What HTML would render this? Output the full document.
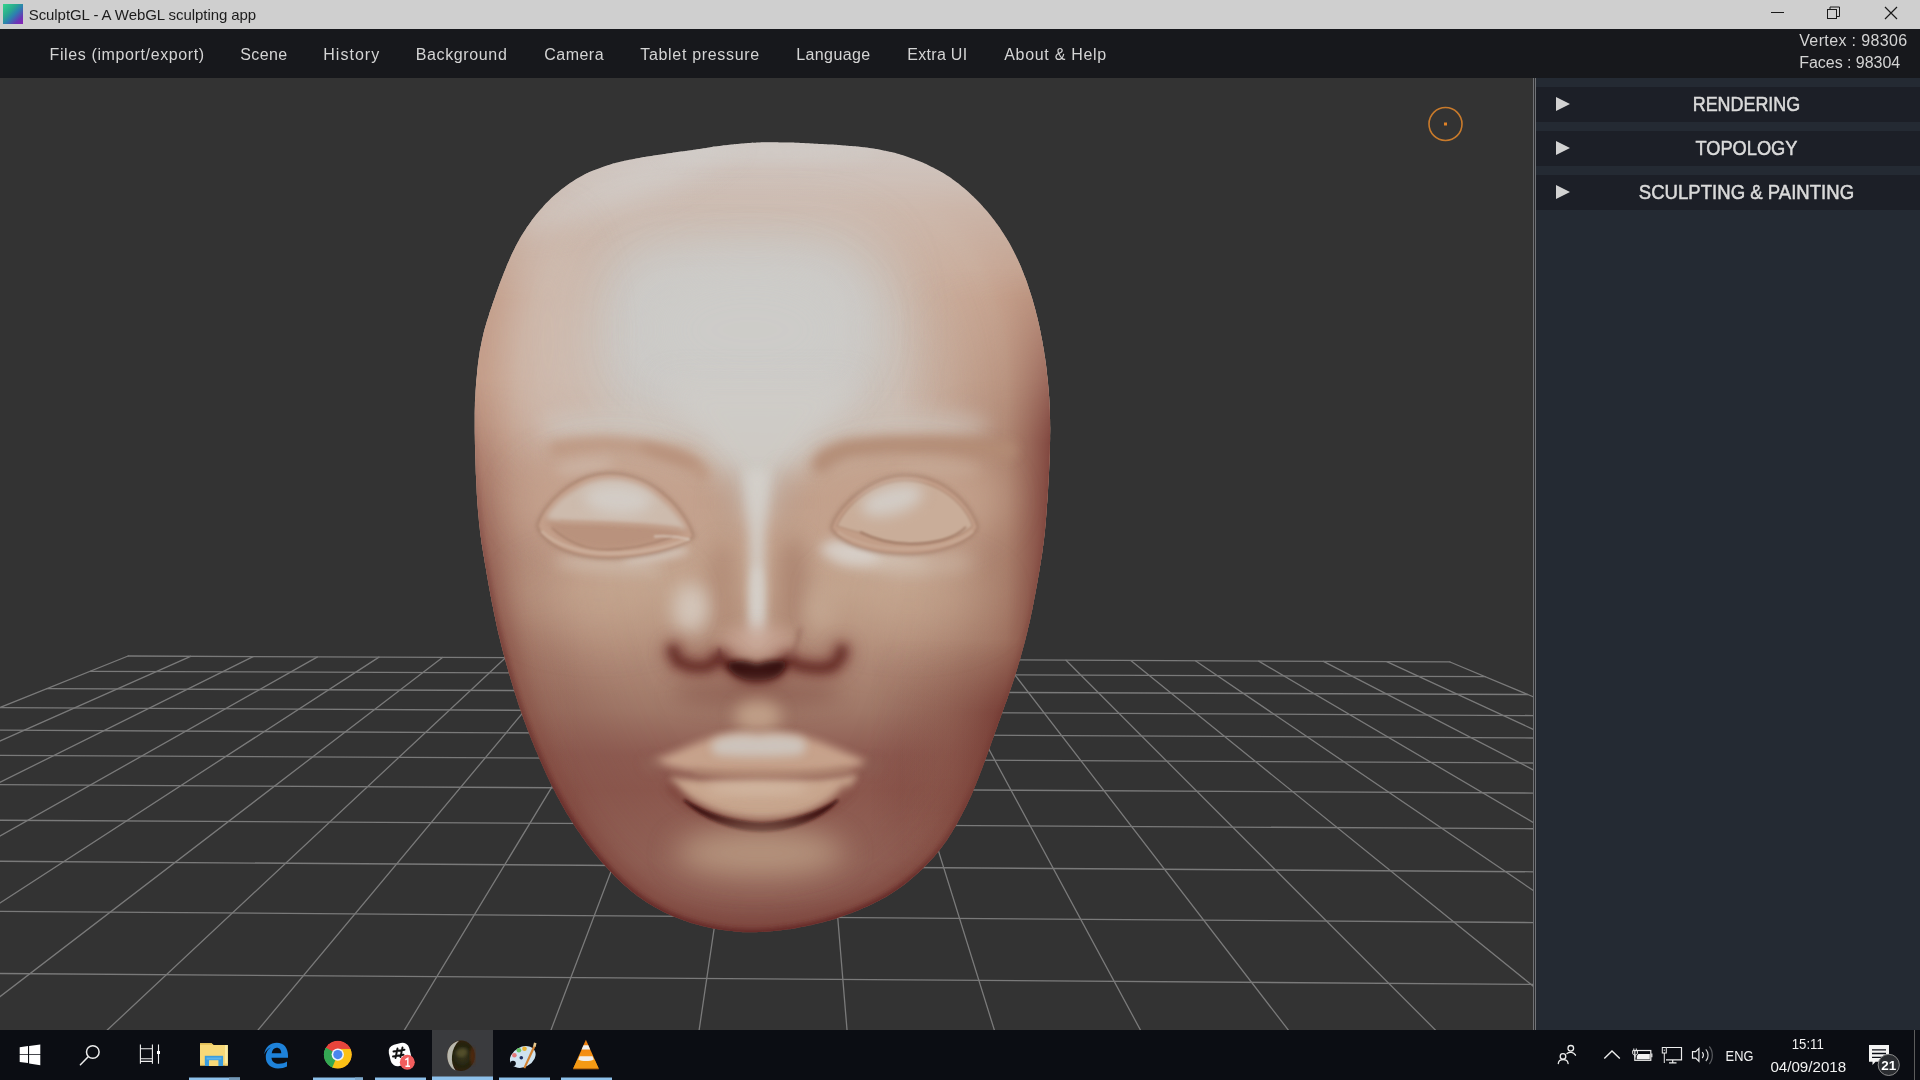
<!DOCTYPE html>
<html><head><meta charset="utf-8"><title>SculptGL - A WebGL sculpting app</title>
<style>
*{margin:0;padding:0;box-sizing:border-box}
html,body{width:1920px;height:1080px;overflow:hidden;background:#333;font-family:"Liberation Sans",sans-serif}
#title{position:absolute;left:0;top:0;width:1920px;height:29px;background:#cfcfcf}
#title .ico{position:absolute;left:3px;top:4px;width:20px;height:20px;background:linear-gradient(135deg,#34d58c 0%,#2aa88f 35%,#2d7fb0 55%,#6a35b5 80%,#8a22b8 100%)}
#title .txt{position:absolute;left:29px;top:5px;font-size:15px;line-height:20px;color:#1a1a1a;white-space:nowrap;width:227px}
#title svg{position:absolute;left:0;top:0}
#title,#menu,#side,#task{will-change:transform;transform:translateZ(0)}
#menu{position:absolute;left:0;top:29px;width:1920px;height:49px;background:#17181c}
.mi{position:absolute;top:13px;height:24px;line-height:24px;font-size:16.5px;color:#d6d6d6;white-space:nowrap;text-align:center}
.stat{position:absolute;left:1800px;font-size:16.5px;color:#d6d6d6;white-space:nowrap;line-height:20px}
#view{position:absolute;left:0;top:78px;width:1534px;height:952px;background:#333;overflow:hidden}
#view svg{position:absolute;left:0;top:0}
#side{position:absolute;left:1533px;top:78px;width:387px;height:952px;background:#242a33;border-left:3px solid #707276;box-shadow:inset 0 0 0 0 #000}
#side:before{content:'';position:absolute;left:-2px;top:0;width:1px;height:952px;background:#2c2d30}
.sec{position:absolute;left:0;width:384px;height:35px;background:#1c1f27}
.sec .tri{position:absolute;left:20px;top:10px;width:0;height:0;border-left:14px solid #d2d2d2;border-top:7px solid transparent;border-bottom:7px solid transparent}
.sec .lab{position:absolute;left:37px;right:0;top:0;height:35px;line-height:35px;text-align:center;font-size:19.5px;color:#dcdcdc;white-space:nowrap;-webkit-text-stroke:0.45px #dcdcdc}
#task{position:absolute;left:0;top:1030px;width:1920px;height:50px;background:#0b0d13;overflow:hidden}
</style></head><body>
<div id="title"><div class="ico"></div>
<svg width="1920" height="29" viewBox="0 0 1920 29" font-family="Liberation Sans, sans-serif"><text x="28.7" y="19.7" font-size="15" fill="#1c1c1c" textLength="227.5" lengthAdjust="spacing" >SculptGL - A WebGL sculpting app</text><g fill="none" stroke="#1a1a1a" stroke-width="1">
<path d="M1771 12.5h13"/><rect x="1827.5" y="9.5" width="9" height="9"/><path d="M1830 9.5v-2.5h9.5v9.500h-3"/><path d="M1885 7l12 12M1897 7l-12 12" stroke-width="1.2"/></g>
</svg></div>
<div id="menu"><svg width="1920" height="49" viewBox="0 29 1920 49" style="position:absolute;left:0;top:0" font-family="Liberation Sans, sans-serif"><text x="49.5" y="59.6" font-size="16" fill="#d4d4d4" textLength="154.7" lengthAdjust="spacing" >Files (import/export)</text><text x="240.2" y="59.6" font-size="16" fill="#d4d4d4" textLength="47.0" lengthAdjust="spacing" >Scene</text><text x="323.2" y="59.6" font-size="16" fill="#d4d4d4" textLength="56.0" lengthAdjust="spacing" >History</text><text x="415.8" y="59.6" font-size="16" fill="#d4d4d4" textLength="91.0" lengthAdjust="spacing" >Background</text><text x="544.2" y="59.6" font-size="16" fill="#d4d4d4" textLength="59.4" lengthAdjust="spacing" >Camera</text><text x="640.2" y="59.6" font-size="16" fill="#d4d4d4" textLength="119.0" lengthAdjust="spacing" >Tablet pressure</text><text x="796.2" y="59.6" font-size="16" fill="#d4d4d4" textLength="74.0" lengthAdjust="spacing" >Language</text><text x="907.2" y="59.6" font-size="16" fill="#d4d4d4" textLength="60.0" lengthAdjust="spacing" >Extra UI</text><text x="1004.2" y="59.6" font-size="16" fill="#d4d4d4" textLength="102.0" lengthAdjust="spacing" >About &amp; Help</text><text x="1799.2" y="45.8" font-size="16" fill="#d4d4d4" textLength="108.0" lengthAdjust="spacing" >Vertex : 98306</text><text x="1799.2" y="67.8" font-size="16" fill="#d4d4d4" textLength="101.0" lengthAdjust="spacing" >Faces : 98304</text></svg></div>
<div id="view"><svg width="1534" height="952" viewBox="0 78 1534 952">
<g stroke="#7a7a7a" stroke-width="1.3" stroke-linecap="round"><line x1="128.2" y1="656.0" x2="1449.9" y2="661.9"/><line x1="90.2" y1="671.3" x2="1485.3" y2="676.7"/><line x1="46.9" y1="688.7" x2="1527.8" y2="694.5"/><line x1="-0.1" y1="707.6" x2="1578.7" y2="715.8"/><line x1="-55.6" y1="729.9" x2="1633.2" y2="738.5"/><line x1="-117.2" y1="754.7" x2="1693.8" y2="763.8"/><line x1="-189.1" y1="783.7" x2="1766.7" y2="794.3"/><line x1="-276.1" y1="818.7" x2="1853.4" y2="830.5"/><line x1="-375.6" y1="858.7" x2="1959.3" y2="874.7"/><line x1="-497.2" y1="907.7" x2="2083.4" y2="926.6"/><line x1="-649.4" y1="968.9" x2="2233.5" y2="989.3"/><line x1="-845.9" y1="1048.0" x2="2435.3" y2="1073.6"/><line x1="-1094.6" y1="1148.1" x2="2698.9" y2="1183.7"/><line x1="-1431.3" y1="1283.6" x2="3064.6" y2="1336.4"/><line x1="128.1" y1="656.0" x2="-975.1" y2="1100.0"/><line x1="190.6" y1="656.3" x2="-807.4" y2="1100.0"/><line x1="253.1" y1="656.6" x2="-640.0" y2="1100.0"/><line x1="317.5" y1="656.9" x2="-467.9" y2="1100.0"/><line x1="379.0" y1="657.1" x2="-303.9" y2="1100.0"/><line x1="442.5" y1="657.4" x2="-134.9" y2="1100.0"/><line x1="505.5" y1="657.7" x2="32.4" y2="1100.0"/><line x1="568.6" y1="658.0" x2="199.6" y2="1100.0"/><line x1="630.0" y1="658.3" x2="362.0" y2="1100.0"/><line x1="691.6" y1="658.6" x2="524.5" y2="1100.0"/><line x1="754.0" y1="658.8" x2="688.8" y2="1100.0"/><line x1="816.4" y1="659.1" x2="852.8" y2="1100.0"/><line x1="878.7" y1="659.4" x2="1016.2" y2="1100.0"/><line x1="940.6" y1="659.7" x2="1178.2" y2="1100.0"/><line x1="1003.4" y1="660.0" x2="1342.2" y2="1100.0"/><line x1="1066.0" y1="660.3" x2="1505.3" y2="1100.0"/><line x1="1130.8" y1="660.6" x2="1673.8" y2="1100.0"/><line x1="1195.4" y1="660.8" x2="1841.5" y2="1100.0"/><line x1="1258.7" y1="661.1" x2="2005.4" y2="1100.0"/><line x1="1323.4" y1="661.4" x2="2172.6" y2="1100.0"/><line x1="1386.7" y1="661.7" x2="2335.8" y2="1100.0"/><line x1="1450.0" y1="662.0" x2="2498.6" y2="1100.0"/></g>
<defs><filter id="b8" filterUnits="userSpaceOnUse" x="380" y="80" width="760" height="900"><feGaussianBlur stdDeviation="0.8"/></filter><filter id="b9" filterUnits="userSpaceOnUse" x="380" y="80" width="760" height="900"><feGaussianBlur stdDeviation="0.9"/></filter><filter id="b10" filterUnits="userSpaceOnUse" x="380" y="80" width="760" height="900"><feGaussianBlur stdDeviation="1"/></filter><filter id="b12" filterUnits="userSpaceOnUse" x="380" y="80" width="760" height="900"><feGaussianBlur stdDeviation="1.2"/></filter><filter id="b15" filterUnits="userSpaceOnUse" x="380" y="80" width="760" height="900"><feGaussianBlur stdDeviation="1.5"/></filter><filter id="b18" filterUnits="userSpaceOnUse" x="380" y="80" width="760" height="900"><feGaussianBlur stdDeviation="1.8"/></filter><filter id="b22" filterUnits="userSpaceOnUse" x="380" y="80" width="760" height="900"><feGaussianBlur stdDeviation="2.2"/></filter><filter id="b24" filterUnits="userSpaceOnUse" x="380" y="80" width="760" height="900"><feGaussianBlur stdDeviation="2.4"/></filter><filter id="b25" filterUnits="userSpaceOnUse" x="380" y="80" width="760" height="900"><feGaussianBlur stdDeviation="2.5"/></filter><filter id="b30" filterUnits="userSpaceOnUse" x="380" y="80" width="760" height="900"><feGaussianBlur stdDeviation="3"/></filter><filter id="b35" filterUnits="userSpaceOnUse" x="380" y="80" width="760" height="900"><feGaussianBlur stdDeviation="3.5"/></filter><filter id="b40" filterUnits="userSpaceOnUse" x="380" y="80" width="760" height="900"><feGaussianBlur stdDeviation="4"/></filter><filter id="b42" filterUnits="userSpaceOnUse" x="380" y="80" width="760" height="900"><feGaussianBlur stdDeviation="4.2"/></filter><filter id="b45" filterUnits="userSpaceOnUse" x="380" y="80" width="760" height="900"><feGaussianBlur stdDeviation="4.5"/></filter><filter id="b50" filterUnits="userSpaceOnUse" x="380" y="80" width="760" height="900"><feGaussianBlur stdDeviation="5"/></filter><filter id="b55" filterUnits="userSpaceOnUse" x="380" y="80" width="760" height="900"><feGaussianBlur stdDeviation="5.5"/></filter><filter id="b60" filterUnits="userSpaceOnUse" x="380" y="80" width="760" height="900"><feGaussianBlur stdDeviation="6"/></filter><filter id="b70" filterUnits="userSpaceOnUse" x="380" y="80" width="760" height="900"><feGaussianBlur stdDeviation="7"/></filter><filter id="b80" filterUnits="userSpaceOnUse" x="380" y="80" width="760" height="900"><feGaussianBlur stdDeviation="8"/></filter><filter id="b90" filterUnits="userSpaceOnUse" x="380" y="80" width="760" height="900"><feGaussianBlur stdDeviation="9"/></filter><filter id="b100" filterUnits="userSpaceOnUse" x="380" y="80" width="760" height="900"><feGaussianBlur stdDeviation="10"/></filter><filter id="b130" filterUnits="userSpaceOnUse" x="380" y="80" width="760" height="900"><feGaussianBlur stdDeviation="13"/></filter><filter id="b140" filterUnits="userSpaceOnUse" x="380" y="80" width="760" height="900"><feGaussianBlur stdDeviation="14"/></filter><filter id="b150" filterUnits="userSpaceOnUse" x="380" y="80" width="760" height="900"><feGaussianBlur stdDeviation="15"/></filter><filter id="b180" filterUnits="userSpaceOnUse" x="380" y="80" width="760" height="900"><feGaussianBlur stdDeviation="18"/></filter><filter id="b220" filterUnits="userSpaceOnUse" x="380" y="80" width="760" height="900"><feGaussianBlur stdDeviation="22"/></filter><filter id="b250" filterUnits="userSpaceOnUse" x="380" y="80" width="760" height="900"><feGaussianBlur stdDeviation="25"/></filter><filter id="b300" filterUnits="userSpaceOnUse" x="380" y="80" width="760" height="900"><feGaussianBlur stdDeviation="30"/></filter><filter id="b320" filterUnits="userSpaceOnUse" x="380" y="80" width="760" height="900"><feGaussianBlur stdDeviation="32"/></filter><filter id="b350" filterUnits="userSpaceOnUse" x="380" y="80" width="760" height="900"><feGaussianBlur stdDeviation="35"/></filter><clipPath id="hc"><path d="M760.0 142.4C766.8 142.2 763.4 142.3 770.2 142.3C776.9 142.2 773.5 142.2 780.3 142.4C787.1 142.5 783.7 142.4 790.5 142.6C797.2 142.8 793.8 142.7 800.6 143.0C807.4 143.2 804.0 143.1 810.7 143.4C817.5 143.7 814.1 143.6 820.9 143.9C827.6 144.3 824.3 144.1 831.0 144.6C837.8 145.0 834.4 144.8 841.2 145.2C847.9 145.7 844.5 145.5 851.3 146.0C858.0 146.6 854.7 146.2 861.4 147.0C868.1 147.7 864.8 147.2 871.4 148.2C878.1 149.2 874.8 148.6 881.4 149.9C888.0 151.2 884.7 150.5 891.3 152.1C897.8 153.7 894.6 152.9 901.0 154.8C907.5 156.8 904.3 155.7 910.6 158.0C917.0 160.2 913.9 159.0 920.1 161.6C926.3 164.2 923.3 162.8 929.4 165.7C935.4 168.6 932.5 167.0 938.3 170.3C944.2 173.6 941.3 171.8 947.0 175.5C952.7 179.1 949.9 177.2 955.3 181.2C960.7 185.2 958.1 183.1 963.2 187.5C968.4 191.8 965.9 189.6 970.8 194.2C975.7 198.8 973.3 196.4 978.0 201.3C982.7 206.2 980.4 203.7 984.8 208.8C989.3 213.8 987.1 211.2 991.3 216.5C995.5 221.8 993.5 219.1 997.4 224.6C1001.3 230.1 999.4 227.3 1003.1 233.0C1006.7 238.6 1005.0 235.8 1008.4 241.6C1011.7 247.5 1010.1 244.5 1013.2 250.5C1016.3 256.5 1014.8 253.5 1017.7 259.6C1020.5 265.7 1019.2 262.6 1021.8 268.9C1024.3 275.1 1023.1 272.0 1025.5 278.3C1027.8 284.6 1026.7 281.5 1028.8 287.9C1031.0 294.3 1029.9 291.1 1031.9 297.5C1033.8 304.0 1032.9 300.8 1034.7 307.3C1036.4 313.8 1035.6 310.5 1037.2 317.1C1038.8 323.7 1038.0 320.4 1039.5 327.0C1040.9 333.6 1040.2 330.3 1041.5 337.0C1042.8 343.6 1042.2 340.3 1043.3 346.9C1044.5 353.6 1043.9 350.3 1044.9 357.0C1045.9 363.6 1045.5 360.3 1046.3 367.0C1047.1 373.7 1046.7 370.4 1047.4 377.1C1048.1 383.8 1047.8 380.5 1048.4 387.2C1049.0 393.9 1048.7 390.6 1049.2 397.3C1049.6 404.1 1049.4 400.7 1049.7 407.5C1050.0 414.2 1049.9 410.8 1050.0 417.6C1050.2 424.4 1050.1 421.0 1050.2 427.7C1050.2 434.5 1050.2 431.1 1050.1 437.9C1050.0 444.7 1050.1 441.3 1049.9 448.0C1049.8 454.8 1049.9 451.4 1049.6 458.2C1049.4 465.0 1049.5 461.6 1049.2 468.3C1048.9 475.1 1049.1 471.7 1048.7 478.5C1048.3 485.2 1048.5 481.9 1048.1 488.6C1047.7 495.4 1047.9 492.0 1047.5 498.8C1047.0 505.5 1047.2 502.1 1046.7 508.9C1046.3 515.6 1046.5 512.3 1046.0 519.0C1045.4 525.8 1045.7 522.4 1045.1 529.1C1044.4 535.9 1044.8 532.5 1044.0 539.2C1043.2 545.9 1043.6 542.6 1042.7 549.3C1041.8 556.0 1042.3 552.6 1041.2 559.3C1040.2 566.0 1040.7 562.7 1039.6 569.3C1038.5 576.0 1039.1 572.7 1037.9 579.3C1036.7 586.0 1037.3 582.7 1036.1 589.3C1034.9 596.0 1035.5 592.7 1034.2 599.3C1033.0 606.0 1033.6 602.7 1032.3 609.3C1030.9 615.9 1031.6 612.6 1030.2 619.2C1028.7 625.8 1029.5 622.5 1027.9 629.1C1026.4 635.7 1027.2 632.4 1025.5 639.0C1023.8 645.5 1024.7 642.3 1022.9 648.8C1021.1 655.3 1022.0 652.1 1020.2 658.6C1018.3 665.1 1019.3 661.8 1017.3 668.3C1015.3 674.8 1016.3 671.6 1014.3 678.0C1012.2 684.4 1013.3 681.2 1011.1 687.6C1008.9 694.0 1010.0 690.8 1007.8 697.2C1005.5 703.6 1006.6 700.4 1004.3 706.8C1002.0 713.2 1003.2 710.0 1000.9 716.3C998.6 722.7 999.7 719.5 997.4 725.9C995.1 732.3 996.3 729.1 994.0 735.5C991.7 741.8 992.9 738.6 990.6 745.0C988.4 751.4 989.5 748.2 987.2 754.6C984.9 761.0 986.1 757.8 983.7 764.1C981.4 770.5 982.6 767.3 980.1 773.6C977.7 779.9 979.0 776.8 976.4 783.1C973.8 789.3 975.2 786.2 972.5 792.4C969.8 798.6 971.2 795.5 968.3 801.7C965.4 807.8 966.9 804.7 963.8 810.8C960.8 816.8 962.4 813.8 959.1 819.7C955.9 825.7 957.6 822.8 954.1 828.6C950.7 834.4 952.5 831.5 948.8 837.2C945.1 842.8 947.0 840.0 943.0 845.4C939.0 850.9 941.1 848.2 936.8 853.4C932.5 858.6 934.7 856.0 930.1 861.0C925.5 865.9 927.9 863.5 923.1 868.2C918.2 872.9 920.7 870.7 915.7 875.1C910.6 879.6 913.2 877.5 908.0 881.7C902.7 885.9 905.4 883.9 899.9 887.8C894.4 891.7 897.2 889.8 891.5 893.4C885.8 897.0 888.7 895.3 882.8 898.6C877.0 901.9 879.9 900.3 873.9 903.3C867.8 906.3 870.9 904.9 864.7 907.6C858.5 910.4 861.6 909.0 855.4 911.6C849.1 914.1 852.2 912.9 845.9 915.1C839.5 917.4 842.7 916.3 836.3 918.4C829.8 920.4 833.1 919.5 826.6 921.3C820.1 923.1 823.3 922.3 816.8 923.8C810.2 925.4 813.5 924.7 806.9 926.1C800.2 927.4 803.6 926.8 796.9 927.9C790.2 929.1 793.6 928.6 786.9 929.5C780.2 930.4 783.5 930.0 776.8 930.8C770.1 931.5 773.5 931.2 766.7 931.7C760.0 932.1 763.3 932.0 756.6 932.2C749.9 932.3 753.2 932.3 746.5 932.2C739.7 932.0 743.1 932.2 736.4 931.7C729.6 931.2 733.0 931.5 726.3 930.6C719.6 929.8 722.9 930.3 716.3 929.1C709.6 927.9 712.9 928.6 706.4 927.1C699.8 925.6 703.1 926.4 696.6 924.6C690.1 922.8 693.3 923.8 686.9 921.6C680.5 919.4 683.7 920.6 677.4 918.1C671.1 915.6 674.2 917.0 668.1 914.1C662.0 911.3 665.0 912.8 659.1 909.6C653.1 906.4 656.0 908.1 650.3 904.6C644.6 901.0 647.4 902.9 641.9 899.0C636.3 895.2 639.0 897.2 633.7 893.0C628.4 888.9 631.0 891.0 625.9 886.6C620.9 882.1 623.4 884.4 618.5 879.7C613.6 875.1 616.0 877.4 611.3 872.6C606.7 867.7 609.0 870.2 604.5 865.1C600.0 860.1 602.2 862.6 597.9 857.4C593.6 852.2 595.7 854.8 591.6 849.5C587.4 844.1 589.4 846.8 585.4 841.4C581.4 835.9 583.4 838.7 579.6 833.1C575.7 827.6 577.6 830.4 573.9 824.7C570.2 819.0 572.0 821.9 568.5 816.1C565.0 810.4 566.7 813.3 563.4 807.4C560.0 801.5 561.7 804.5 558.5 798.5C555.3 792.5 556.9 795.5 553.8 789.5C550.7 783.5 552.2 786.5 549.3 780.4C546.4 774.3 547.8 777.4 545.0 771.2C542.2 765.1 543.6 768.1 540.9 761.9C538.1 755.7 539.5 758.8 536.9 752.6C534.2 746.4 535.5 749.5 533.0 743.2C530.4 737.0 531.6 740.1 529.2 733.8C526.7 727.5 527.9 730.7 525.6 724.3C523.2 718.0 524.3 721.2 522.1 714.8C519.9 708.4 521.0 711.6 518.8 705.2C516.7 698.7 517.8 702.0 515.7 695.5C513.7 689.1 514.7 692.3 512.7 685.8C510.7 679.3 511.7 682.6 509.8 676.1C507.9 669.6 508.8 672.8 507.0 666.3C505.2 659.8 506.1 663.1 504.3 656.5C502.6 650.0 503.4 653.3 501.7 646.7C500.1 640.1 500.9 643.4 499.3 636.8C497.7 630.3 498.5 633.6 497.0 627.0C495.6 620.3 496.3 623.7 494.9 617.0C493.5 610.4 494.2 613.7 492.9 607.1C491.5 600.4 492.2 603.8 490.9 597.1C489.7 590.5 490.3 593.8 489.1 587.1C487.9 580.5 488.5 583.8 487.3 577.1C486.2 570.5 486.7 573.8 485.6 567.1C484.4 560.4 485.0 563.8 483.9 557.1C482.8 550.4 483.3 553.8 482.3 547.1C481.2 540.4 481.7 543.7 480.8 537.0C479.9 530.3 480.3 533.7 479.6 527.0C478.8 520.3 479.2 523.6 478.6 516.9C477.9 510.1 478.2 513.5 477.7 506.8C477.2 500.0 477.5 503.4 477.0 496.6C476.6 489.9 476.8 493.3 476.5 486.5C476.1 479.7 476.3 483.1 476.0 476.3C475.7 469.6 475.8 473.0 475.6 466.2C475.4 459.4 475.5 462.8 475.3 456.0C475.1 449.3 475.2 452.7 475.0 445.9C474.9 439.1 474.9 442.5 474.8 435.7C474.7 429.0 474.7 432.4 474.7 425.6C474.7 418.8 474.7 422.2 474.7 415.4C474.8 408.7 474.7 412.1 474.9 405.3C475.1 398.5 475.0 401.9 475.4 395.2C475.7 388.4 475.5 391.8 476.0 385.0C476.5 378.3 476.2 381.6 476.9 374.9C477.5 368.2 477.1 371.5 477.9 364.8C478.8 358.1 478.3 361.5 479.3 354.8C480.3 348.1 479.7 351.4 481.1 344.8C482.4 338.2 481.6 341.5 483.2 334.9C484.8 328.4 484.0 331.6 485.8 325.1C487.7 318.6 486.7 321.9 488.8 315.4C490.8 309.0 489.8 312.2 492.0 305.8C494.1 299.4 493.0 302.6 495.3 296.2C497.6 289.8 496.4 293.0 498.7 286.6C501.1 280.3 499.9 283.4 502.3 277.1C504.7 270.8 503.4 273.9 506.0 267.7C508.5 261.4 507.2 264.5 509.9 258.4C512.7 252.2 511.2 255.2 514.3 249.2C517.3 243.2 515.7 246.1 519.0 240.3C522.3 234.4 520.6 237.3 524.2 231.6C527.8 225.9 525.9 228.7 529.8 223.2C533.8 217.7 531.7 220.4 535.9 215.1C540.1 209.9 538.0 212.4 542.5 207.4C547.0 202.4 544.7 204.8 549.5 200.1C554.3 195.4 551.8 197.7 556.9 193.3C562.0 188.9 559.4 191.0 564.7 187.0C570.1 182.9 567.4 184.8 573.0 181.2C578.7 177.6 575.8 179.3 581.7 176.1C587.6 172.9 584.6 174.4 590.7 171.6C596.8 168.9 593.7 170.2 600.1 167.9C606.4 165.6 603.2 166.7 609.7 164.7C616.1 162.8 612.9 163.7 619.4 162.1C626.0 160.4 622.7 161.2 629.3 159.8C635.9 158.5 632.6 159.1 639.3 157.9C645.9 156.8 642.6 157.3 649.3 156.3C656.0 155.2 652.6 155.8 659.3 154.8C666.0 153.8 662.7 154.3 669.4 153.3C676.1 152.3 672.7 152.8 679.4 151.8C686.1 150.8 682.8 151.3 689.5 150.4C696.2 149.4 692.8 149.9 699.5 148.9C706.2 147.9 702.9 148.4 709.6 147.4C716.3 146.5 712.9 146.9 719.6 146.1C726.3 145.2 723.0 145.6 729.7 144.8C736.4 144.0 733.0 144.3 739.8 143.7C746.5 143.1 743.1 143.3 749.9 142.9C756.6 142.5 753.3 142.6 760.0 142.4Z"/></clipPath><linearGradient id="skin" gradientUnits="userSpaceOnUse" x1="0" y1="142" x2="0" y2="933">
<stop offset="0" stop-color="#d0c8c3"/><stop offset="0.086" stop-color="#cfc0b7"/><stop offset="0.20" stop-color="#ccc0b7"/>
<stop offset="0.326" stop-color="#cdbdb2"/><stop offset="0.39" stop-color="#c9b09e"/><stop offset="0.45" stop-color="#c3a18d"/>
<stop offset="0.566" stop-color="#c2a38d"/><stop offset="0.636" stop-color="#b38e7a"/><stop offset="0.718" stop-color="#a07868"/>
<stop offset="0.775" stop-color="#8e5c52"/><stop offset="0.82" stop-color="#8c584e"/><stop offset="0.908" stop-color="#96685c"/>
<stop offset="0.955" stop-color="#93655a"/><stop offset="1" stop-color="#80504a"/></linearGradient>
<linearGradient id="upG" gradientUnits="userSpaceOnUse" x1="0" y1="142" x2="0" y2="933">
<stop offset="0" stop-color="#000"/><stop offset="0.05" stop-color="#1a1a1a"/><stop offset="0.2" stop-color="#fff"/><stop offset="0.45" stop-color="#fff"/><stop offset="0.7" stop-color="#000"/><stop offset="1" stop-color="#000"/></linearGradient>
<linearGradient id="loG" gradientUnits="userSpaceOnUse" x1="0" y1="142" x2="0" y2="933">
<stop offset="0" stop-color="#000"/><stop offset="0.3" stop-color="#000"/><stop offset="0.62" stop-color="#fff"/><stop offset="1" stop-color="#fff"/></linearGradient>
<mask id="upM" maskUnits="userSpaceOnUse" x="400" y="100" width="720" height="900"><rect x="400" y="100" width="720" height="900" fill="url(#upG)"/></mask>
<mask id="loM" maskUnits="userSpaceOnUse" x="400" y="100" width="720" height="900"><rect x="400" y="100" width="720" height="900" fill="url(#loG)"/></mask>
<linearGradient id="rsh" gradientUnits="userSpaceOnUse" x1="900" y1="0" x2="1052" y2="0"><stop offset="0" stop-color="#a8806a" stop-opacity="0"/><stop offset="0.35" stop-color="#a8806a" stop-opacity="0.3"/><stop offset="0.7" stop-color="#a07460" stop-opacity="0.6"/><stop offset="1" stop-color="#7a3e38" stop-opacity="0.9"/></linearGradient>
<linearGradient id="lsh" gradientUnits="userSpaceOnUse" x1="580" y1="0" x2="474" y2="0"><stop offset="0" stop-color="#a07460" stop-opacity="0"/><stop offset="0.5" stop-color="#a07460" stop-opacity="0.18"/><stop offset="1" stop-color="#8a5048" stop-opacity="0.6"/></linearGradient>
<linearGradient id="shG" gradientUnits="userSpaceOnUse" x1="0" y1="142" x2="0" y2="933"><stop offset="0" stop-color="#000"/><stop offset="0.16" stop-color="#000"/><stop offset="0.38" stop-color="#fff"/><stop offset="0.8" stop-color="#fff"/><stop offset="1" stop-color="#555"/></linearGradient>
<linearGradient id="shG2" gradientUnits="userSpaceOnUse" x1="0" y1="142" x2="0" y2="933"><stop offset="0" stop-color="#000"/><stop offset="0.36" stop-color="#000"/><stop offset="0.6" stop-color="#fff"/><stop offset="0.8" stop-color="#fff"/><stop offset="1" stop-color="#555"/></linearGradient>
<mask id="shM2" maskUnits="userSpaceOnUse" x="400" y="100" width="720" height="900"><rect x="400" y="100" width="720" height="900" fill="url(#shG2)"/></mask>
<linearGradient id="lrd" gradientUnits="userSpaceOnUse" x1="870" y1="0" x2="1010" y2="0"><stop offset="0" stop-color="#6e2e2a" stop-opacity="0"/><stop offset="0.5" stop-color="#6e2e2a" stop-opacity="0.22"/><stop offset="1" stop-color="#642624" stop-opacity="0.6"/></linearGradient>
<linearGradient id="lrdG" gradientUnits="userSpaceOnUse" x1="0" y1="640" x2="0" y2="880"><stop offset="0" stop-color="#000"/><stop offset="0.3" stop-color="#fff"/><stop offset="0.7" stop-color="#fff"/><stop offset="1" stop-color="#000"/></linearGradient>
<mask id="lrdM" maskUnits="userSpaceOnUse" x="400" y="100" width="720" height="900"><rect x="400" y="100" width="720" height="900" fill="url(#lrdG)"/></mask>
<mask id="shM" maskUnits="userSpaceOnUse" x="400" y="100" width="720" height="900"><rect x="400" y="100" width="720" height="900" fill="url(#shG)"/></mask></defs><g clip-path="url(#hc)"><rect x="440" y="120" width="640" height="830" fill="url(#skin)"/><g mask="url(#upM)"><path d="M760.0 142.4C766.8 142.2 763.4 142.3 770.2 142.3C776.9 142.2 773.5 142.2 780.3 142.4C787.1 142.5 783.7 142.4 790.5 142.6C797.2 142.8 793.8 142.7 800.6 143.0C807.4 143.2 804.0 143.1 810.7 143.4C817.5 143.7 814.1 143.6 820.9 143.9C827.6 144.3 824.3 144.1 831.0 144.6C837.8 145.0 834.4 144.8 841.2 145.2C847.9 145.7 844.5 145.5 851.3 146.0C858.0 146.6 854.7 146.2 861.4 147.0C868.1 147.7 864.8 147.2 871.4 148.2C878.1 149.2 874.8 148.6 881.4 149.9C888.0 151.2 884.7 150.5 891.3 152.1C897.8 153.7 894.6 152.9 901.0 154.8C907.5 156.8 904.3 155.7 910.6 158.0C917.0 160.2 913.9 159.0 920.1 161.6C926.3 164.2 923.3 162.8 929.4 165.7C935.4 168.6 932.5 167.0 938.3 170.3C944.2 173.6 941.3 171.8 947.0 175.5C952.7 179.1 949.9 177.2 955.3 181.2C960.7 185.2 958.1 183.1 963.2 187.5C968.4 191.8 965.9 189.6 970.8 194.2C975.7 198.8 973.3 196.4 978.0 201.3C982.7 206.2 980.4 203.7 984.8 208.8C989.3 213.8 987.1 211.2 991.3 216.5C995.5 221.8 993.5 219.1 997.4 224.6C1001.3 230.1 999.4 227.3 1003.1 233.0C1006.7 238.6 1005.0 235.8 1008.4 241.6C1011.7 247.5 1010.1 244.5 1013.2 250.5C1016.3 256.5 1014.8 253.5 1017.7 259.6C1020.5 265.7 1019.2 262.6 1021.8 268.9C1024.3 275.1 1023.1 272.0 1025.5 278.3C1027.8 284.6 1026.7 281.5 1028.8 287.9C1031.0 294.3 1029.9 291.1 1031.9 297.5C1033.8 304.0 1032.9 300.8 1034.7 307.3C1036.4 313.8 1035.6 310.5 1037.2 317.1C1038.8 323.7 1038.0 320.4 1039.5 327.0C1040.9 333.6 1040.2 330.3 1041.5 337.0C1042.8 343.6 1042.2 340.3 1043.3 346.9C1044.5 353.6 1043.9 350.3 1044.9 357.0C1045.9 363.6 1045.5 360.3 1046.3 367.0C1047.1 373.7 1046.7 370.4 1047.4 377.1C1048.1 383.8 1047.8 380.5 1048.4 387.2C1049.0 393.9 1048.7 390.6 1049.2 397.3C1049.6 404.1 1049.4 400.7 1049.7 407.5C1050.0 414.2 1049.9 410.8 1050.0 417.6C1050.2 424.4 1050.1 421.0 1050.2 427.7C1050.2 434.5 1050.2 431.1 1050.1 437.9C1050.0 444.7 1050.1 441.3 1049.9 448.0C1049.8 454.8 1049.9 451.4 1049.6 458.2C1049.4 465.0 1049.5 461.6 1049.2 468.3C1048.9 475.1 1049.1 471.7 1048.7 478.5C1048.3 485.2 1048.5 481.9 1048.1 488.6C1047.7 495.4 1047.9 492.0 1047.5 498.8C1047.0 505.5 1047.2 502.1 1046.7 508.9C1046.3 515.6 1046.5 512.3 1046.0 519.0C1045.4 525.8 1045.7 522.4 1045.1 529.1C1044.4 535.9 1044.8 532.5 1044.0 539.2C1043.2 545.9 1043.6 542.6 1042.7 549.3C1041.8 556.0 1042.3 552.6 1041.2 559.3C1040.2 566.0 1040.7 562.7 1039.6 569.3C1038.5 576.0 1039.1 572.7 1037.9 579.3C1036.7 586.0 1037.3 582.7 1036.1 589.3C1034.9 596.0 1035.5 592.7 1034.2 599.3C1033.0 606.0 1033.6 602.7 1032.3 609.3C1030.9 615.9 1031.6 612.6 1030.2 619.2C1028.7 625.8 1029.5 622.5 1027.9 629.1C1026.4 635.7 1027.2 632.4 1025.5 639.0C1023.8 645.5 1024.7 642.3 1022.9 648.8C1021.1 655.3 1022.0 652.1 1020.2 658.6C1018.3 665.1 1019.3 661.8 1017.3 668.3C1015.3 674.8 1016.3 671.6 1014.3 678.0C1012.2 684.4 1013.3 681.2 1011.1 687.6C1008.9 694.0 1010.0 690.8 1007.8 697.2C1005.5 703.6 1006.6 700.4 1004.3 706.8C1002.0 713.2 1003.2 710.0 1000.9 716.3C998.6 722.7 999.7 719.5 997.4 725.9C995.1 732.3 996.3 729.1 994.0 735.5C991.7 741.8 992.9 738.6 990.6 745.0C988.4 751.4 989.5 748.2 987.2 754.6C984.9 761.0 986.1 757.8 983.7 764.1C981.4 770.5 982.6 767.3 980.1 773.6C977.7 779.9 979.0 776.8 976.4 783.1C973.8 789.3 975.2 786.2 972.5 792.4C969.8 798.6 971.2 795.5 968.3 801.7C965.4 807.8 966.9 804.7 963.8 810.8C960.8 816.8 962.4 813.8 959.1 819.7C955.9 825.7 957.6 822.8 954.1 828.6C950.7 834.4 952.5 831.5 948.8 837.2C945.1 842.8 947.0 840.0 943.0 845.4C939.0 850.9 941.1 848.2 936.8 853.4C932.5 858.6 934.7 856.0 930.1 861.0C925.5 865.9 927.9 863.5 923.1 868.2C918.2 872.9 920.7 870.7 915.7 875.1C910.6 879.6 913.2 877.5 908.0 881.7C902.7 885.9 905.4 883.9 899.9 887.8C894.4 891.7 897.2 889.8 891.5 893.4C885.8 897.0 888.7 895.3 882.8 898.6C877.0 901.9 879.9 900.3 873.9 903.3C867.8 906.3 870.9 904.9 864.7 907.6C858.5 910.4 861.6 909.0 855.4 911.6C849.1 914.1 852.2 912.9 845.9 915.1C839.5 917.4 842.7 916.3 836.3 918.4C829.8 920.4 833.1 919.5 826.6 921.3C820.1 923.1 823.3 922.3 816.8 923.8C810.2 925.4 813.5 924.7 806.9 926.1C800.2 927.4 803.6 926.8 796.9 927.9C790.2 929.1 793.6 928.6 786.9 929.5C780.2 930.4 783.5 930.0 776.8 930.8C770.1 931.5 773.5 931.2 766.7 931.7C760.0 932.1 763.3 932.0 756.6 932.2C749.9 932.3 753.2 932.3 746.5 932.2C739.7 932.0 743.1 932.2 736.4 931.7C729.6 931.2 733.0 931.5 726.3 930.6C719.6 929.8 722.9 930.3 716.3 929.1C709.6 927.9 712.9 928.6 706.4 927.1C699.8 925.6 703.1 926.4 696.6 924.6C690.1 922.8 693.3 923.8 686.9 921.6C680.5 919.4 683.7 920.6 677.4 918.1C671.1 915.6 674.2 917.0 668.1 914.1C662.0 911.3 665.0 912.8 659.1 909.6C653.1 906.4 656.0 908.1 650.3 904.6C644.6 901.0 647.4 902.9 641.9 899.0C636.3 895.2 639.0 897.2 633.7 893.0C628.4 888.9 631.0 891.0 625.9 886.6C620.9 882.1 623.4 884.4 618.5 879.7C613.6 875.1 616.0 877.4 611.3 872.6C606.7 867.7 609.0 870.2 604.5 865.1C600.0 860.1 602.2 862.6 597.9 857.4C593.6 852.2 595.7 854.8 591.6 849.5C587.4 844.1 589.4 846.8 585.4 841.4C581.4 835.9 583.4 838.7 579.6 833.1C575.7 827.6 577.6 830.4 573.9 824.7C570.2 819.0 572.0 821.9 568.5 816.1C565.0 810.4 566.7 813.3 563.4 807.4C560.0 801.5 561.7 804.5 558.5 798.5C555.3 792.5 556.9 795.5 553.8 789.5C550.7 783.5 552.2 786.5 549.3 780.4C546.4 774.3 547.8 777.4 545.0 771.2C542.2 765.1 543.6 768.1 540.9 761.9C538.1 755.7 539.5 758.8 536.9 752.6C534.2 746.4 535.5 749.5 533.0 743.2C530.4 737.0 531.6 740.1 529.2 733.8C526.7 727.5 527.9 730.7 525.6 724.3C523.2 718.0 524.3 721.2 522.1 714.8C519.9 708.4 521.0 711.6 518.8 705.2C516.7 698.7 517.8 702.0 515.7 695.5C513.7 689.1 514.7 692.3 512.7 685.8C510.7 679.3 511.7 682.6 509.8 676.1C507.9 669.6 508.8 672.8 507.0 666.3C505.2 659.8 506.1 663.1 504.3 656.5C502.6 650.0 503.4 653.3 501.7 646.7C500.1 640.1 500.9 643.4 499.3 636.8C497.7 630.3 498.5 633.6 497.0 627.0C495.6 620.3 496.3 623.7 494.9 617.0C493.5 610.4 494.2 613.7 492.9 607.1C491.5 600.4 492.2 603.8 490.9 597.1C489.7 590.5 490.3 593.8 489.1 587.1C487.9 580.5 488.5 583.8 487.3 577.1C486.2 570.5 486.7 573.8 485.6 567.1C484.4 560.4 485.0 563.8 483.9 557.1C482.8 550.4 483.3 553.8 482.3 547.1C481.2 540.4 481.7 543.7 480.8 537.0C479.9 530.3 480.3 533.7 479.6 527.0C478.8 520.3 479.2 523.6 478.6 516.9C477.9 510.1 478.2 513.5 477.7 506.8C477.2 500.0 477.5 503.4 477.0 496.6C476.6 489.9 476.8 493.3 476.5 486.5C476.1 479.7 476.3 483.1 476.0 476.3C475.7 469.6 475.8 473.0 475.6 466.2C475.4 459.4 475.5 462.8 475.3 456.0C475.1 449.3 475.2 452.7 475.0 445.9C474.9 439.1 474.9 442.5 474.8 435.7C474.7 429.0 474.7 432.4 474.7 425.6C474.7 418.8 474.7 422.2 474.7 415.4C474.8 408.7 474.7 412.1 474.9 405.3C475.1 398.5 475.0 401.9 475.4 395.2C475.7 388.4 475.5 391.8 476.0 385.0C476.5 378.3 476.2 381.6 476.9 374.9C477.5 368.2 477.1 371.5 477.9 364.8C478.8 358.1 478.3 361.5 479.3 354.8C480.3 348.1 479.7 351.4 481.1 344.8C482.4 338.2 481.6 341.5 483.2 334.9C484.8 328.4 484.0 331.6 485.8 325.1C487.7 318.6 486.7 321.9 488.8 315.4C490.8 309.0 489.8 312.2 492.0 305.8C494.1 299.4 493.0 302.6 495.3 296.2C497.6 289.8 496.4 293.0 498.7 286.6C501.1 280.3 499.9 283.4 502.3 277.1C504.7 270.8 503.4 273.9 506.0 267.7C508.5 261.4 507.2 264.5 509.9 258.4C512.7 252.2 511.2 255.2 514.3 249.2C517.3 243.2 515.7 246.1 519.0 240.3C522.3 234.4 520.6 237.3 524.2 231.6C527.8 225.9 525.9 228.7 529.8 223.2C533.8 217.7 531.7 220.4 535.9 215.1C540.1 209.9 538.0 212.4 542.5 207.4C547.0 202.4 544.7 204.8 549.5 200.1C554.3 195.4 551.8 197.7 556.9 193.3C562.0 188.9 559.4 191.0 564.7 187.0C570.1 182.9 567.4 184.8 573.0 181.2C578.7 177.6 575.8 179.3 581.7 176.1C587.6 172.9 584.6 174.4 590.7 171.6C596.8 168.9 593.7 170.2 600.1 167.9C606.4 165.6 603.2 166.7 609.7 164.7C616.1 162.8 612.9 163.7 619.4 162.1C626.0 160.4 622.7 161.2 629.3 159.8C635.9 158.5 632.6 159.1 639.3 157.9C645.9 156.8 642.6 157.3 649.3 156.3C656.0 155.2 652.6 155.8 659.3 154.8C666.0 153.8 662.7 154.3 669.4 153.3C676.1 152.3 672.7 152.8 679.4 151.8C686.1 150.8 682.8 151.3 689.5 150.4C696.2 149.4 692.8 149.9 699.5 148.9C706.2 147.9 702.9 148.4 709.6 147.4C716.3 146.5 712.9 146.9 719.6 146.1C726.3 145.2 723.0 145.6 729.7 144.8C736.4 144.0 733.0 144.3 739.8 143.7C746.5 143.1 743.1 143.3 749.9 142.9C756.6 142.5 753.3 142.6 760.0 142.4Z" fill="none" stroke="#c9a692" stroke-width="210" opacity="0.9" filter="url(#b350)" /><path d="M760.0 142.4C766.8 142.2 763.4 142.3 770.2 142.3C776.9 142.2 773.5 142.2 780.3 142.4C787.1 142.5 783.7 142.4 790.5 142.6C797.2 142.8 793.8 142.7 800.6 143.0C807.4 143.2 804.0 143.1 810.7 143.4C817.5 143.7 814.1 143.6 820.9 143.9C827.6 144.3 824.3 144.1 831.0 144.6C837.8 145.0 834.4 144.8 841.2 145.2C847.9 145.7 844.5 145.5 851.3 146.0C858.0 146.6 854.7 146.2 861.4 147.0C868.1 147.7 864.8 147.2 871.4 148.2C878.1 149.2 874.8 148.6 881.4 149.9C888.0 151.2 884.7 150.5 891.3 152.1C897.8 153.7 894.6 152.9 901.0 154.8C907.5 156.8 904.3 155.7 910.6 158.0C917.0 160.2 913.9 159.0 920.1 161.6C926.3 164.2 923.3 162.8 929.4 165.7C935.4 168.6 932.5 167.0 938.3 170.3C944.2 173.6 941.3 171.8 947.0 175.5C952.7 179.1 949.9 177.2 955.3 181.2C960.7 185.2 958.1 183.1 963.2 187.5C968.4 191.8 965.9 189.6 970.8 194.2C975.7 198.8 973.3 196.4 978.0 201.3C982.7 206.2 980.4 203.7 984.8 208.8C989.3 213.8 987.1 211.2 991.3 216.5C995.5 221.8 993.5 219.1 997.4 224.6C1001.3 230.1 999.4 227.3 1003.1 233.0C1006.7 238.6 1005.0 235.8 1008.4 241.6C1011.7 247.5 1010.1 244.5 1013.2 250.5C1016.3 256.5 1014.8 253.5 1017.7 259.6C1020.5 265.7 1019.2 262.6 1021.8 268.9C1024.3 275.1 1023.1 272.0 1025.5 278.3C1027.8 284.6 1026.7 281.5 1028.8 287.9C1031.0 294.3 1029.9 291.1 1031.9 297.5C1033.8 304.0 1032.9 300.8 1034.7 307.3C1036.4 313.8 1035.6 310.5 1037.2 317.1C1038.8 323.7 1038.0 320.4 1039.5 327.0C1040.9 333.6 1040.2 330.3 1041.5 337.0C1042.8 343.6 1042.2 340.3 1043.3 346.9C1044.5 353.6 1043.9 350.3 1044.9 357.0C1045.9 363.6 1045.5 360.3 1046.3 367.0C1047.1 373.7 1046.7 370.4 1047.4 377.1C1048.1 383.8 1047.8 380.5 1048.4 387.2C1049.0 393.9 1048.7 390.6 1049.2 397.3C1049.6 404.1 1049.4 400.7 1049.7 407.5C1050.0 414.2 1049.9 410.8 1050.0 417.6C1050.2 424.4 1050.1 421.0 1050.2 427.7C1050.2 434.5 1050.2 431.1 1050.1 437.9C1050.0 444.7 1050.1 441.3 1049.9 448.0C1049.8 454.8 1049.9 451.4 1049.6 458.2C1049.4 465.0 1049.5 461.6 1049.2 468.3C1048.9 475.1 1049.1 471.7 1048.7 478.5C1048.3 485.2 1048.5 481.9 1048.1 488.6C1047.7 495.4 1047.9 492.0 1047.5 498.8C1047.0 505.5 1047.2 502.1 1046.7 508.9C1046.3 515.6 1046.5 512.3 1046.0 519.0C1045.4 525.8 1045.7 522.4 1045.1 529.1C1044.4 535.9 1044.8 532.5 1044.0 539.2C1043.2 545.9 1043.6 542.6 1042.7 549.3C1041.8 556.0 1042.3 552.6 1041.2 559.3C1040.2 566.0 1040.7 562.7 1039.6 569.3C1038.5 576.0 1039.1 572.7 1037.9 579.3C1036.7 586.0 1037.3 582.7 1036.1 589.3C1034.9 596.0 1035.5 592.7 1034.2 599.3C1033.0 606.0 1033.6 602.7 1032.3 609.3C1030.9 615.9 1031.6 612.6 1030.2 619.2C1028.7 625.8 1029.5 622.5 1027.9 629.1C1026.4 635.7 1027.2 632.4 1025.5 639.0C1023.8 645.5 1024.7 642.3 1022.9 648.8C1021.1 655.3 1022.0 652.1 1020.2 658.6C1018.3 665.1 1019.3 661.8 1017.3 668.3C1015.3 674.8 1016.3 671.6 1014.3 678.0C1012.2 684.4 1013.3 681.2 1011.1 687.6C1008.9 694.0 1010.0 690.8 1007.8 697.2C1005.5 703.6 1006.6 700.4 1004.3 706.8C1002.0 713.2 1003.2 710.0 1000.9 716.3C998.6 722.7 999.7 719.5 997.4 725.9C995.1 732.3 996.3 729.1 994.0 735.5C991.7 741.8 992.9 738.6 990.6 745.0C988.4 751.4 989.5 748.2 987.2 754.6C984.9 761.0 986.1 757.8 983.7 764.1C981.4 770.5 982.6 767.3 980.1 773.6C977.7 779.9 979.0 776.8 976.4 783.1C973.8 789.3 975.2 786.2 972.5 792.4C969.8 798.6 971.2 795.5 968.3 801.7C965.4 807.8 966.9 804.7 963.8 810.8C960.8 816.8 962.4 813.8 959.1 819.7C955.9 825.7 957.6 822.8 954.1 828.6C950.7 834.4 952.5 831.5 948.8 837.2C945.1 842.8 947.0 840.0 943.0 845.4C939.0 850.9 941.1 848.2 936.8 853.4C932.5 858.6 934.7 856.0 930.1 861.0C925.5 865.9 927.9 863.5 923.1 868.2C918.2 872.9 920.7 870.7 915.7 875.1C910.6 879.6 913.2 877.5 908.0 881.7C902.7 885.9 905.4 883.9 899.9 887.8C894.4 891.7 897.2 889.8 891.5 893.4C885.8 897.0 888.7 895.3 882.8 898.6C877.0 901.9 879.9 900.3 873.9 903.3C867.8 906.3 870.9 904.9 864.7 907.6C858.5 910.4 861.6 909.0 855.4 911.6C849.1 914.1 852.2 912.9 845.9 915.1C839.5 917.4 842.7 916.3 836.3 918.4C829.8 920.4 833.1 919.5 826.6 921.3C820.1 923.1 823.3 922.3 816.8 923.8C810.2 925.4 813.5 924.7 806.9 926.1C800.2 927.4 803.6 926.8 796.9 927.9C790.2 929.1 793.6 928.6 786.9 929.5C780.2 930.4 783.5 930.0 776.8 930.8C770.1 931.5 773.5 931.2 766.7 931.7C760.0 932.1 763.3 932.0 756.6 932.2C749.9 932.3 753.2 932.3 746.5 932.2C739.7 932.0 743.1 932.2 736.4 931.7C729.6 931.2 733.0 931.5 726.3 930.6C719.6 929.8 722.9 930.3 716.3 929.1C709.6 927.9 712.9 928.6 706.4 927.1C699.8 925.6 703.1 926.4 696.6 924.6C690.1 922.8 693.3 923.8 686.9 921.6C680.5 919.4 683.7 920.6 677.4 918.1C671.1 915.6 674.2 917.0 668.1 914.1C662.0 911.3 665.0 912.8 659.1 909.6C653.1 906.4 656.0 908.1 650.3 904.6C644.6 901.0 647.4 902.9 641.9 899.0C636.3 895.2 639.0 897.2 633.7 893.0C628.4 888.9 631.0 891.0 625.9 886.6C620.9 882.1 623.4 884.4 618.5 879.7C613.6 875.1 616.0 877.4 611.3 872.6C606.7 867.7 609.0 870.2 604.5 865.1C600.0 860.1 602.2 862.6 597.9 857.4C593.6 852.2 595.7 854.8 591.6 849.5C587.4 844.1 589.4 846.8 585.4 841.4C581.4 835.9 583.4 838.7 579.6 833.1C575.7 827.6 577.6 830.4 573.9 824.7C570.2 819.0 572.0 821.9 568.5 816.1C565.0 810.4 566.7 813.3 563.4 807.4C560.0 801.5 561.7 804.5 558.5 798.5C555.3 792.5 556.9 795.5 553.8 789.5C550.7 783.5 552.2 786.5 549.3 780.4C546.4 774.3 547.8 777.4 545.0 771.2C542.2 765.1 543.6 768.1 540.9 761.9C538.1 755.7 539.5 758.8 536.9 752.6C534.2 746.4 535.5 749.5 533.0 743.2C530.4 737.0 531.6 740.1 529.2 733.8C526.7 727.5 527.9 730.7 525.6 724.3C523.2 718.0 524.3 721.2 522.1 714.8C519.9 708.4 521.0 711.6 518.8 705.2C516.7 698.7 517.8 702.0 515.7 695.5C513.7 689.1 514.7 692.3 512.7 685.8C510.7 679.3 511.7 682.6 509.8 676.1C507.9 669.6 508.8 672.8 507.0 666.3C505.2 659.8 506.1 663.1 504.3 656.5C502.6 650.0 503.4 653.3 501.7 646.7C500.1 640.1 500.9 643.4 499.3 636.8C497.7 630.3 498.5 633.6 497.0 627.0C495.6 620.3 496.3 623.7 494.9 617.0C493.5 610.4 494.2 613.7 492.9 607.1C491.5 600.4 492.2 603.8 490.9 597.1C489.7 590.5 490.3 593.8 489.1 587.1C487.9 580.5 488.5 583.8 487.3 577.1C486.2 570.5 486.7 573.8 485.6 567.1C484.4 560.4 485.0 563.8 483.9 557.1C482.8 550.4 483.3 553.8 482.3 547.1C481.2 540.4 481.7 543.7 480.8 537.0C479.9 530.3 480.3 533.7 479.6 527.0C478.8 520.3 479.2 523.6 478.6 516.9C477.9 510.1 478.2 513.5 477.7 506.8C477.2 500.0 477.5 503.4 477.0 496.6C476.6 489.9 476.8 493.3 476.5 486.5C476.1 479.7 476.3 483.1 476.0 476.3C475.7 469.6 475.8 473.0 475.6 466.2C475.4 459.4 475.5 462.8 475.3 456.0C475.1 449.3 475.2 452.7 475.0 445.9C474.9 439.1 474.9 442.5 474.8 435.7C474.7 429.0 474.7 432.4 474.7 425.6C474.7 418.8 474.7 422.2 474.7 415.4C474.8 408.7 474.7 412.1 474.9 405.3C475.1 398.5 475.0 401.9 475.4 395.2C475.7 388.4 475.5 391.8 476.0 385.0C476.5 378.3 476.2 381.6 476.9 374.9C477.5 368.2 477.1 371.5 477.9 364.8C478.8 358.1 478.3 361.5 479.3 354.8C480.3 348.1 479.7 351.4 481.1 344.8C482.4 338.2 481.6 341.5 483.2 334.9C484.8 328.4 484.0 331.6 485.8 325.1C487.7 318.6 486.7 321.9 488.8 315.4C490.8 309.0 489.8 312.2 492.0 305.8C494.1 299.4 493.0 302.6 495.3 296.2C497.6 289.8 496.4 293.0 498.7 286.6C501.1 280.3 499.9 283.4 502.3 277.1C504.7 270.8 503.4 273.9 506.0 267.7C508.5 261.4 507.2 264.5 509.9 258.4C512.7 252.2 511.2 255.2 514.3 249.2C517.3 243.2 515.7 246.1 519.0 240.3C522.3 234.4 520.6 237.3 524.2 231.6C527.8 225.9 525.9 228.7 529.8 223.2C533.8 217.7 531.7 220.4 535.9 215.1C540.1 209.9 538.0 212.4 542.5 207.4C547.0 202.4 544.7 204.8 549.5 200.1C554.3 195.4 551.8 197.7 556.9 193.3C562.0 188.9 559.4 191.0 564.7 187.0C570.1 182.9 567.4 184.8 573.0 181.2C578.7 177.6 575.8 179.3 581.7 176.1C587.6 172.9 584.6 174.4 590.7 171.6C596.8 168.9 593.7 170.2 600.1 167.9C606.4 165.6 603.2 166.7 609.7 164.7C616.1 162.8 612.9 163.7 619.4 162.1C626.0 160.4 622.7 161.2 629.3 159.8C635.9 158.5 632.6 159.1 639.3 157.9C645.9 156.8 642.6 157.3 649.3 156.3C656.0 155.2 652.6 155.8 659.3 154.8C666.0 153.8 662.7 154.3 669.4 153.3C676.1 152.3 672.7 152.8 679.4 151.8C686.1 150.8 682.8 151.3 689.5 150.4C696.2 149.4 692.8 149.9 699.5 148.9C706.2 147.9 702.9 148.4 709.6 147.4C716.3 146.5 712.9 146.9 719.6 146.1C726.3 145.2 723.0 145.6 729.7 144.8C736.4 144.0 733.0 144.3 739.8 143.7C746.5 143.1 743.1 143.3 749.9 142.9C756.6 142.5 753.3 142.6 760.0 142.4Z" fill="none" stroke="#bf947f" stroke-width="50" opacity="0.6" filter="url(#b140)" /></g><g mask="url(#loM)"><path d="M760.0 142.4C766.8 142.2 763.4 142.3 770.2 142.3C776.9 142.2 773.5 142.2 780.3 142.4C787.1 142.5 783.7 142.4 790.5 142.6C797.2 142.8 793.8 142.7 800.6 143.0C807.4 143.2 804.0 143.1 810.7 143.4C817.5 143.7 814.1 143.6 820.9 143.9C827.6 144.3 824.3 144.1 831.0 144.6C837.8 145.0 834.4 144.8 841.2 145.2C847.9 145.7 844.5 145.5 851.3 146.0C858.0 146.6 854.7 146.2 861.4 147.0C868.1 147.7 864.8 147.2 871.4 148.2C878.1 149.2 874.8 148.6 881.4 149.9C888.0 151.2 884.7 150.5 891.3 152.1C897.8 153.7 894.6 152.9 901.0 154.8C907.5 156.8 904.3 155.7 910.6 158.0C917.0 160.2 913.9 159.0 920.1 161.6C926.3 164.2 923.3 162.8 929.4 165.7C935.4 168.6 932.5 167.0 938.3 170.3C944.2 173.6 941.3 171.8 947.0 175.5C952.7 179.1 949.9 177.2 955.3 181.2C960.7 185.2 958.1 183.1 963.2 187.5C968.4 191.8 965.9 189.6 970.8 194.2C975.7 198.8 973.3 196.4 978.0 201.3C982.7 206.2 980.4 203.7 984.8 208.8C989.3 213.8 987.1 211.2 991.3 216.5C995.5 221.8 993.5 219.1 997.4 224.6C1001.3 230.1 999.4 227.3 1003.1 233.0C1006.7 238.6 1005.0 235.8 1008.4 241.6C1011.7 247.5 1010.1 244.5 1013.2 250.5C1016.3 256.5 1014.8 253.5 1017.7 259.6C1020.5 265.7 1019.2 262.6 1021.8 268.9C1024.3 275.1 1023.1 272.0 1025.5 278.3C1027.8 284.6 1026.7 281.5 1028.8 287.9C1031.0 294.3 1029.9 291.1 1031.9 297.5C1033.8 304.0 1032.9 300.8 1034.7 307.3C1036.4 313.8 1035.6 310.5 1037.2 317.1C1038.8 323.7 1038.0 320.4 1039.5 327.0C1040.9 333.6 1040.2 330.3 1041.5 337.0C1042.8 343.6 1042.2 340.3 1043.3 346.9C1044.5 353.6 1043.9 350.3 1044.9 357.0C1045.9 363.6 1045.5 360.3 1046.3 367.0C1047.1 373.7 1046.7 370.4 1047.4 377.1C1048.1 383.8 1047.8 380.5 1048.4 387.2C1049.0 393.9 1048.7 390.6 1049.2 397.3C1049.6 404.1 1049.4 400.7 1049.7 407.5C1050.0 414.2 1049.9 410.8 1050.0 417.6C1050.2 424.4 1050.1 421.0 1050.2 427.7C1050.2 434.5 1050.2 431.1 1050.1 437.9C1050.0 444.7 1050.1 441.3 1049.9 448.0C1049.8 454.8 1049.9 451.4 1049.6 458.2C1049.4 465.0 1049.5 461.6 1049.2 468.3C1048.9 475.1 1049.1 471.7 1048.7 478.5C1048.3 485.2 1048.5 481.9 1048.1 488.6C1047.7 495.4 1047.9 492.0 1047.5 498.8C1047.0 505.5 1047.2 502.1 1046.7 508.9C1046.3 515.6 1046.5 512.3 1046.0 519.0C1045.4 525.8 1045.7 522.4 1045.1 529.1C1044.4 535.9 1044.8 532.5 1044.0 539.2C1043.2 545.9 1043.6 542.6 1042.7 549.3C1041.8 556.0 1042.3 552.6 1041.2 559.3C1040.2 566.0 1040.7 562.7 1039.6 569.3C1038.5 576.0 1039.1 572.7 1037.9 579.3C1036.7 586.0 1037.3 582.7 1036.1 589.3C1034.9 596.0 1035.5 592.7 1034.2 599.3C1033.0 606.0 1033.6 602.7 1032.3 609.3C1030.9 615.9 1031.6 612.6 1030.2 619.2C1028.7 625.8 1029.5 622.5 1027.9 629.1C1026.4 635.7 1027.2 632.4 1025.5 639.0C1023.8 645.5 1024.7 642.3 1022.9 648.8C1021.1 655.3 1022.0 652.1 1020.2 658.6C1018.3 665.1 1019.3 661.8 1017.3 668.3C1015.3 674.8 1016.3 671.6 1014.3 678.0C1012.2 684.4 1013.3 681.2 1011.1 687.6C1008.9 694.0 1010.0 690.8 1007.8 697.2C1005.5 703.6 1006.6 700.4 1004.3 706.8C1002.0 713.2 1003.2 710.0 1000.9 716.3C998.6 722.7 999.7 719.5 997.4 725.9C995.1 732.3 996.3 729.1 994.0 735.5C991.7 741.8 992.9 738.6 990.6 745.0C988.4 751.4 989.5 748.2 987.2 754.6C984.9 761.0 986.1 757.8 983.7 764.1C981.4 770.5 982.6 767.3 980.1 773.6C977.7 779.9 979.0 776.8 976.4 783.1C973.8 789.3 975.2 786.2 972.5 792.4C969.8 798.6 971.2 795.5 968.3 801.7C965.4 807.8 966.9 804.7 963.8 810.8C960.8 816.8 962.4 813.8 959.1 819.7C955.9 825.7 957.6 822.8 954.1 828.6C950.7 834.4 952.5 831.5 948.8 837.2C945.1 842.8 947.0 840.0 943.0 845.4C939.0 850.9 941.1 848.2 936.8 853.4C932.5 858.6 934.7 856.0 930.1 861.0C925.5 865.9 927.9 863.5 923.1 868.2C918.2 872.9 920.7 870.7 915.7 875.1C910.6 879.6 913.2 877.5 908.0 881.7C902.7 885.9 905.4 883.9 899.9 887.8C894.4 891.7 897.2 889.8 891.5 893.4C885.8 897.0 888.7 895.3 882.8 898.6C877.0 901.9 879.9 900.3 873.9 903.3C867.8 906.3 870.9 904.9 864.7 907.6C858.5 910.4 861.6 909.0 855.4 911.6C849.1 914.1 852.2 912.9 845.9 915.1C839.5 917.4 842.7 916.3 836.3 918.4C829.8 920.4 833.1 919.5 826.6 921.3C820.1 923.1 823.3 922.3 816.8 923.8C810.2 925.4 813.5 924.7 806.9 926.1C800.2 927.4 803.6 926.8 796.9 927.9C790.2 929.1 793.6 928.6 786.9 929.5C780.2 930.4 783.5 930.0 776.8 930.8C770.1 931.5 773.5 931.2 766.7 931.7C760.0 932.1 763.3 932.0 756.6 932.2C749.9 932.3 753.2 932.3 746.5 932.2C739.7 932.0 743.1 932.2 736.4 931.7C729.6 931.2 733.0 931.5 726.3 930.6C719.6 929.8 722.9 930.3 716.3 929.1C709.6 927.9 712.9 928.6 706.4 927.1C699.8 925.6 703.1 926.4 696.6 924.6C690.1 922.8 693.3 923.8 686.9 921.6C680.5 919.4 683.7 920.6 677.4 918.1C671.1 915.6 674.2 917.0 668.1 914.1C662.0 911.3 665.0 912.8 659.1 909.6C653.1 906.4 656.0 908.1 650.3 904.6C644.6 901.0 647.4 902.9 641.9 899.0C636.3 895.2 639.0 897.2 633.7 893.0C628.4 888.9 631.0 891.0 625.9 886.6C620.9 882.1 623.4 884.4 618.5 879.7C613.6 875.1 616.0 877.4 611.3 872.6C606.7 867.7 609.0 870.2 604.5 865.1C600.0 860.1 602.2 862.6 597.9 857.4C593.6 852.2 595.7 854.8 591.6 849.5C587.4 844.1 589.4 846.8 585.4 841.4C581.4 835.9 583.4 838.7 579.6 833.1C575.7 827.6 577.6 830.4 573.9 824.7C570.2 819.0 572.0 821.9 568.5 816.1C565.0 810.4 566.7 813.3 563.4 807.4C560.0 801.5 561.7 804.5 558.5 798.5C555.3 792.5 556.9 795.5 553.8 789.5C550.7 783.5 552.2 786.5 549.3 780.4C546.4 774.3 547.8 777.4 545.0 771.2C542.2 765.1 543.6 768.1 540.9 761.9C538.1 755.7 539.5 758.8 536.9 752.6C534.2 746.4 535.5 749.5 533.0 743.2C530.4 737.0 531.6 740.1 529.2 733.8C526.7 727.5 527.9 730.7 525.6 724.3C523.2 718.0 524.3 721.2 522.1 714.8C519.9 708.4 521.0 711.6 518.8 705.2C516.7 698.7 517.8 702.0 515.7 695.5C513.7 689.1 514.7 692.3 512.7 685.8C510.7 679.3 511.7 682.6 509.8 676.1C507.9 669.6 508.8 672.8 507.0 666.3C505.2 659.8 506.1 663.1 504.3 656.5C502.6 650.0 503.4 653.3 501.7 646.7C500.1 640.1 500.9 643.4 499.3 636.8C497.7 630.3 498.5 633.6 497.0 627.0C495.6 620.3 496.3 623.7 494.9 617.0C493.5 610.4 494.2 613.7 492.9 607.1C491.5 600.4 492.2 603.8 490.9 597.1C489.7 590.5 490.3 593.8 489.1 587.1C487.9 580.5 488.5 583.8 487.3 577.1C486.2 570.5 486.7 573.8 485.6 567.1C484.4 560.4 485.0 563.8 483.9 557.1C482.8 550.4 483.3 553.8 482.3 547.1C481.2 540.4 481.7 543.7 480.8 537.0C479.9 530.3 480.3 533.7 479.6 527.0C478.8 520.3 479.2 523.6 478.6 516.9C477.9 510.1 478.2 513.5 477.7 506.8C477.2 500.0 477.5 503.4 477.0 496.6C476.6 489.9 476.8 493.3 476.5 486.5C476.1 479.7 476.3 483.1 476.0 476.3C475.7 469.6 475.8 473.0 475.6 466.2C475.4 459.4 475.5 462.8 475.3 456.0C475.1 449.3 475.2 452.7 475.0 445.9C474.9 439.1 474.9 442.5 474.8 435.7C474.7 429.0 474.7 432.4 474.7 425.6C474.7 418.8 474.7 422.2 474.7 415.4C474.8 408.7 474.7 412.1 474.9 405.3C475.1 398.5 475.0 401.9 475.4 395.2C475.7 388.4 475.5 391.8 476.0 385.0C476.5 378.3 476.2 381.6 476.9 374.9C477.5 368.2 477.1 371.5 477.9 364.8C478.8 358.1 478.3 361.5 479.3 354.8C480.3 348.1 479.7 351.4 481.1 344.8C482.4 338.2 481.6 341.5 483.2 334.9C484.8 328.4 484.0 331.6 485.8 325.1C487.7 318.6 486.7 321.9 488.8 315.4C490.8 309.0 489.8 312.2 492.0 305.8C494.1 299.4 493.0 302.6 495.3 296.2C497.6 289.8 496.4 293.0 498.7 286.6C501.1 280.3 499.9 283.4 502.3 277.1C504.7 270.8 503.4 273.9 506.0 267.7C508.5 261.4 507.2 264.5 509.9 258.4C512.7 252.2 511.2 255.2 514.3 249.2C517.3 243.2 515.7 246.1 519.0 240.3C522.3 234.4 520.6 237.3 524.2 231.6C527.8 225.9 525.9 228.7 529.8 223.2C533.8 217.7 531.7 220.4 535.9 215.1C540.1 209.9 538.0 212.4 542.5 207.4C547.0 202.4 544.7 204.8 549.5 200.1C554.3 195.4 551.8 197.7 556.9 193.3C562.0 188.9 559.4 191.0 564.7 187.0C570.1 182.9 567.4 184.8 573.0 181.2C578.7 177.6 575.8 179.3 581.7 176.1C587.6 172.9 584.6 174.4 590.7 171.6C596.8 168.9 593.7 170.2 600.1 167.9C606.4 165.6 603.2 166.7 609.7 164.7C616.1 162.8 612.9 163.7 619.4 162.1C626.0 160.4 622.7 161.2 629.3 159.8C635.9 158.5 632.6 159.1 639.3 157.9C645.9 156.8 642.6 157.3 649.3 156.3C656.0 155.2 652.6 155.8 659.3 154.8C666.0 153.8 662.7 154.3 669.4 153.3C676.1 152.3 672.7 152.8 679.4 151.8C686.1 150.8 682.8 151.3 689.5 150.4C696.2 149.4 692.8 149.9 699.5 148.9C706.2 147.9 702.9 148.4 709.6 147.4C716.3 146.5 712.9 146.9 719.6 146.1C726.3 145.2 723.0 145.6 729.7 144.8C736.4 144.0 733.0 144.3 739.8 143.7C746.5 143.1 743.1 143.3 749.9 142.9C756.6 142.5 753.3 142.6 760.0 142.4Z" fill="none" stroke="#86524a" stroke-width="130" opacity="0.45" filter="url(#b320)" /><path d="M760.0 142.4C766.8 142.2 763.4 142.3 770.2 142.3C776.9 142.2 773.5 142.2 780.3 142.4C787.1 142.5 783.7 142.4 790.5 142.6C797.2 142.8 793.8 142.7 800.6 143.0C807.4 143.2 804.0 143.1 810.7 143.4C817.5 143.7 814.1 143.6 820.9 143.9C827.6 144.3 824.3 144.1 831.0 144.6C837.8 145.0 834.4 144.8 841.2 145.2C847.9 145.7 844.5 145.5 851.3 146.0C858.0 146.6 854.7 146.2 861.4 147.0C868.1 147.7 864.8 147.2 871.4 148.2C878.1 149.2 874.8 148.6 881.4 149.9C888.0 151.2 884.7 150.5 891.3 152.1C897.8 153.7 894.6 152.9 901.0 154.8C907.5 156.8 904.3 155.7 910.6 158.0C917.0 160.2 913.9 159.0 920.1 161.6C926.3 164.2 923.3 162.8 929.4 165.7C935.4 168.6 932.5 167.0 938.3 170.3C944.2 173.6 941.3 171.8 947.0 175.5C952.7 179.1 949.9 177.2 955.3 181.2C960.7 185.2 958.1 183.1 963.2 187.5C968.4 191.8 965.9 189.6 970.8 194.2C975.7 198.8 973.3 196.4 978.0 201.3C982.7 206.2 980.4 203.7 984.8 208.8C989.3 213.8 987.1 211.2 991.3 216.5C995.5 221.8 993.5 219.1 997.4 224.6C1001.3 230.1 999.4 227.3 1003.1 233.0C1006.7 238.6 1005.0 235.8 1008.4 241.6C1011.7 247.5 1010.1 244.5 1013.2 250.5C1016.3 256.5 1014.8 253.5 1017.7 259.6C1020.5 265.7 1019.2 262.6 1021.8 268.9C1024.3 275.1 1023.1 272.0 1025.5 278.3C1027.8 284.6 1026.7 281.5 1028.8 287.9C1031.0 294.3 1029.9 291.1 1031.9 297.5C1033.8 304.0 1032.9 300.8 1034.7 307.3C1036.4 313.8 1035.6 310.5 1037.2 317.1C1038.8 323.7 1038.0 320.4 1039.5 327.0C1040.9 333.6 1040.2 330.3 1041.5 337.0C1042.8 343.6 1042.2 340.3 1043.3 346.9C1044.5 353.6 1043.9 350.3 1044.9 357.0C1045.9 363.6 1045.5 360.3 1046.3 367.0C1047.1 373.7 1046.7 370.4 1047.4 377.1C1048.1 383.8 1047.8 380.5 1048.4 387.2C1049.0 393.9 1048.7 390.6 1049.2 397.3C1049.6 404.1 1049.4 400.7 1049.7 407.5C1050.0 414.2 1049.9 410.8 1050.0 417.6C1050.2 424.4 1050.1 421.0 1050.2 427.7C1050.2 434.5 1050.2 431.1 1050.1 437.9C1050.0 444.7 1050.1 441.3 1049.9 448.0C1049.8 454.8 1049.9 451.4 1049.6 458.2C1049.4 465.0 1049.5 461.6 1049.2 468.3C1048.9 475.1 1049.1 471.7 1048.7 478.5C1048.3 485.2 1048.5 481.9 1048.1 488.6C1047.7 495.4 1047.9 492.0 1047.5 498.8C1047.0 505.5 1047.2 502.1 1046.7 508.9C1046.3 515.6 1046.5 512.3 1046.0 519.0C1045.4 525.8 1045.7 522.4 1045.1 529.1C1044.4 535.9 1044.8 532.5 1044.0 539.2C1043.2 545.9 1043.6 542.6 1042.7 549.3C1041.8 556.0 1042.3 552.6 1041.2 559.3C1040.2 566.0 1040.7 562.7 1039.6 569.3C1038.5 576.0 1039.1 572.7 1037.9 579.3C1036.7 586.0 1037.3 582.7 1036.1 589.3C1034.9 596.0 1035.5 592.7 1034.2 599.3C1033.0 606.0 1033.6 602.7 1032.3 609.3C1030.9 615.9 1031.6 612.6 1030.2 619.2C1028.7 625.8 1029.5 622.5 1027.9 629.1C1026.4 635.7 1027.2 632.4 1025.5 639.0C1023.8 645.5 1024.7 642.3 1022.9 648.8C1021.1 655.3 1022.0 652.1 1020.2 658.6C1018.3 665.1 1019.3 661.8 1017.3 668.3C1015.3 674.8 1016.3 671.6 1014.3 678.0C1012.2 684.4 1013.3 681.2 1011.1 687.6C1008.9 694.0 1010.0 690.8 1007.8 697.2C1005.5 703.6 1006.6 700.4 1004.3 706.8C1002.0 713.2 1003.2 710.0 1000.9 716.3C998.6 722.7 999.7 719.5 997.4 725.9C995.1 732.3 996.3 729.1 994.0 735.5C991.7 741.8 992.9 738.6 990.6 745.0C988.4 751.4 989.5 748.2 987.2 754.6C984.9 761.0 986.1 757.8 983.7 764.1C981.4 770.5 982.6 767.3 980.1 773.6C977.7 779.9 979.0 776.8 976.4 783.1C973.8 789.3 975.2 786.2 972.5 792.4C969.8 798.6 971.2 795.5 968.3 801.7C965.4 807.8 966.9 804.7 963.8 810.8C960.8 816.8 962.4 813.8 959.1 819.7C955.9 825.7 957.6 822.8 954.1 828.6C950.7 834.4 952.5 831.5 948.8 837.2C945.1 842.8 947.0 840.0 943.0 845.4C939.0 850.9 941.1 848.2 936.8 853.4C932.5 858.6 934.7 856.0 930.1 861.0C925.5 865.9 927.9 863.5 923.1 868.2C918.2 872.9 920.7 870.7 915.7 875.1C910.6 879.6 913.2 877.5 908.0 881.7C902.7 885.9 905.4 883.9 899.9 887.8C894.4 891.7 897.2 889.8 891.5 893.4C885.8 897.0 888.7 895.3 882.8 898.6C877.0 901.9 879.9 900.3 873.9 903.3C867.8 906.3 870.9 904.9 864.7 907.6C858.5 910.4 861.6 909.0 855.4 911.6C849.1 914.1 852.2 912.9 845.9 915.1C839.5 917.4 842.7 916.3 836.3 918.4C829.8 920.4 833.1 919.5 826.6 921.3C820.1 923.1 823.3 922.3 816.8 923.8C810.2 925.4 813.5 924.7 806.9 926.1C800.2 927.4 803.6 926.8 796.9 927.9C790.2 929.1 793.6 928.6 786.9 929.5C780.2 930.4 783.5 930.0 776.8 930.8C770.1 931.5 773.5 931.2 766.7 931.7C760.0 932.1 763.3 932.0 756.6 932.2C749.9 932.3 753.2 932.3 746.5 932.2C739.7 932.0 743.1 932.2 736.4 931.7C729.6 931.2 733.0 931.5 726.3 930.6C719.6 929.8 722.9 930.3 716.3 929.1C709.6 927.9 712.9 928.6 706.4 927.1C699.8 925.6 703.1 926.4 696.6 924.6C690.1 922.8 693.3 923.8 686.9 921.6C680.5 919.4 683.7 920.6 677.4 918.1C671.1 915.6 674.2 917.0 668.1 914.1C662.0 911.3 665.0 912.8 659.1 909.6C653.1 906.4 656.0 908.1 650.3 904.6C644.6 901.0 647.4 902.9 641.9 899.0C636.3 895.2 639.0 897.2 633.7 893.0C628.4 888.9 631.0 891.0 625.9 886.6C620.9 882.1 623.4 884.4 618.5 879.7C613.6 875.1 616.0 877.4 611.3 872.6C606.7 867.7 609.0 870.2 604.5 865.1C600.0 860.1 602.2 862.6 597.9 857.4C593.6 852.2 595.7 854.8 591.6 849.5C587.4 844.1 589.4 846.8 585.4 841.4C581.4 835.9 583.4 838.7 579.6 833.1C575.7 827.6 577.6 830.4 573.9 824.7C570.2 819.0 572.0 821.9 568.5 816.1C565.0 810.4 566.7 813.3 563.4 807.4C560.0 801.5 561.7 804.5 558.5 798.5C555.3 792.5 556.9 795.5 553.8 789.5C550.7 783.5 552.2 786.5 549.3 780.4C546.4 774.3 547.8 777.4 545.0 771.2C542.2 765.1 543.6 768.1 540.9 761.9C538.1 755.7 539.5 758.8 536.9 752.6C534.2 746.4 535.5 749.5 533.0 743.2C530.4 737.0 531.6 740.1 529.2 733.8C526.7 727.5 527.9 730.7 525.6 724.3C523.2 718.0 524.3 721.2 522.1 714.8C519.9 708.4 521.0 711.6 518.8 705.2C516.7 698.7 517.8 702.0 515.7 695.5C513.7 689.1 514.7 692.3 512.7 685.8C510.7 679.3 511.7 682.6 509.8 676.1C507.9 669.6 508.8 672.8 507.0 666.3C505.2 659.8 506.1 663.1 504.3 656.5C502.6 650.0 503.4 653.3 501.7 646.7C500.1 640.1 500.9 643.4 499.3 636.8C497.7 630.3 498.5 633.6 497.0 627.0C495.6 620.3 496.3 623.7 494.9 617.0C493.5 610.4 494.2 613.7 492.9 607.1C491.5 600.4 492.2 603.8 490.9 597.1C489.7 590.5 490.3 593.8 489.1 587.1C487.9 580.5 488.5 583.8 487.3 577.1C486.2 570.5 486.7 573.8 485.6 567.1C484.4 560.4 485.0 563.8 483.9 557.1C482.8 550.4 483.3 553.8 482.3 547.1C481.2 540.4 481.7 543.7 480.8 537.0C479.9 530.3 480.3 533.7 479.6 527.0C478.8 520.3 479.2 523.6 478.6 516.9C477.9 510.1 478.2 513.5 477.7 506.8C477.2 500.0 477.5 503.4 477.0 496.6C476.6 489.9 476.8 493.3 476.5 486.5C476.1 479.7 476.3 483.1 476.0 476.3C475.7 469.6 475.8 473.0 475.6 466.2C475.4 459.4 475.5 462.8 475.3 456.0C475.1 449.3 475.2 452.7 475.0 445.9C474.9 439.1 474.9 442.5 474.8 435.7C474.7 429.0 474.7 432.4 474.7 425.6C474.7 418.8 474.7 422.2 474.7 415.4C474.8 408.7 474.7 412.1 474.9 405.3C475.1 398.5 475.0 401.9 475.4 395.2C475.7 388.4 475.5 391.8 476.0 385.0C476.5 378.3 476.2 381.6 476.9 374.9C477.5 368.2 477.1 371.5 477.9 364.8C478.8 358.1 478.3 361.5 479.3 354.8C480.3 348.1 479.7 351.4 481.1 344.8C482.4 338.2 481.6 341.5 483.2 334.9C484.8 328.4 484.0 331.6 485.8 325.1C487.7 318.6 486.7 321.9 488.8 315.4C490.8 309.0 489.8 312.2 492.0 305.8C494.1 299.4 493.0 302.6 495.3 296.2C497.6 289.8 496.4 293.0 498.7 286.6C501.1 280.3 499.9 283.4 502.3 277.1C504.7 270.8 503.4 273.9 506.0 267.7C508.5 261.4 507.2 264.5 509.9 258.4C512.7 252.2 511.2 255.2 514.3 249.2C517.3 243.2 515.7 246.1 519.0 240.3C522.3 234.4 520.6 237.3 524.2 231.6C527.8 225.9 525.9 228.7 529.8 223.2C533.8 217.7 531.7 220.4 535.9 215.1C540.1 209.9 538.0 212.4 542.5 207.4C547.0 202.4 544.7 204.8 549.5 200.1C554.3 195.4 551.8 197.7 556.9 193.3C562.0 188.9 559.4 191.0 564.7 187.0C570.1 182.9 567.4 184.8 573.0 181.2C578.7 177.6 575.8 179.3 581.7 176.1C587.6 172.9 584.6 174.4 590.7 171.6C596.8 168.9 593.7 170.2 600.1 167.9C606.4 165.6 603.2 166.7 609.7 164.7C616.1 162.8 612.9 163.7 619.4 162.1C626.0 160.4 622.7 161.2 629.3 159.8C635.9 158.5 632.6 159.1 639.3 157.9C645.9 156.8 642.6 157.3 649.3 156.3C656.0 155.2 652.6 155.8 659.3 154.8C666.0 153.8 662.7 154.3 669.4 153.3C676.1 152.3 672.7 152.8 679.4 151.8C686.1 150.8 682.8 151.3 689.5 150.4C696.2 149.4 692.8 149.9 699.5 148.9C706.2 147.9 702.9 148.4 709.6 147.4C716.3 146.5 712.9 146.9 719.6 146.1C726.3 145.2 723.0 145.6 729.7 144.8C736.4 144.0 733.0 144.3 739.8 143.7C746.5 143.1 743.1 143.3 749.9 142.9C756.6 142.5 753.3 142.6 760.0 142.4Z" fill="none" stroke="#7a4038" stroke-width="30" opacity="0.6" filter="url(#b90)" /><path d="M760.0 142.4C766.8 142.2 763.4 142.3 770.2 142.3C776.9 142.2 773.5 142.2 780.3 142.4C787.1 142.5 783.7 142.4 790.5 142.6C797.2 142.8 793.8 142.7 800.6 143.0C807.4 143.2 804.0 143.1 810.7 143.4C817.5 143.7 814.1 143.6 820.9 143.9C827.6 144.3 824.3 144.1 831.0 144.6C837.8 145.0 834.4 144.8 841.2 145.2C847.9 145.7 844.5 145.5 851.3 146.0C858.0 146.6 854.7 146.2 861.4 147.0C868.1 147.7 864.8 147.2 871.4 148.2C878.1 149.2 874.8 148.6 881.4 149.9C888.0 151.2 884.7 150.5 891.3 152.1C897.8 153.7 894.6 152.9 901.0 154.8C907.5 156.8 904.3 155.7 910.6 158.0C917.0 160.2 913.9 159.0 920.1 161.6C926.3 164.2 923.3 162.8 929.4 165.7C935.4 168.6 932.5 167.0 938.3 170.3C944.2 173.6 941.3 171.8 947.0 175.5C952.7 179.1 949.9 177.2 955.3 181.2C960.7 185.2 958.1 183.1 963.2 187.5C968.4 191.8 965.9 189.6 970.8 194.2C975.7 198.8 973.3 196.4 978.0 201.3C982.7 206.2 980.4 203.7 984.8 208.8C989.3 213.8 987.1 211.2 991.3 216.5C995.5 221.8 993.5 219.1 997.4 224.6C1001.3 230.1 999.4 227.3 1003.1 233.0C1006.7 238.6 1005.0 235.8 1008.4 241.6C1011.7 247.5 1010.1 244.5 1013.2 250.5C1016.3 256.5 1014.8 253.5 1017.7 259.6C1020.5 265.7 1019.2 262.6 1021.8 268.9C1024.3 275.1 1023.1 272.0 1025.5 278.3C1027.8 284.6 1026.7 281.5 1028.8 287.9C1031.0 294.3 1029.9 291.1 1031.9 297.5C1033.8 304.0 1032.9 300.8 1034.7 307.3C1036.4 313.8 1035.6 310.5 1037.2 317.1C1038.8 323.7 1038.0 320.4 1039.5 327.0C1040.9 333.6 1040.2 330.3 1041.5 337.0C1042.8 343.6 1042.2 340.3 1043.3 346.9C1044.5 353.6 1043.9 350.3 1044.9 357.0C1045.9 363.6 1045.5 360.3 1046.3 367.0C1047.1 373.7 1046.7 370.4 1047.4 377.1C1048.1 383.8 1047.8 380.5 1048.4 387.2C1049.0 393.9 1048.7 390.6 1049.2 397.3C1049.6 404.1 1049.4 400.7 1049.7 407.5C1050.0 414.2 1049.9 410.8 1050.0 417.6C1050.2 424.4 1050.1 421.0 1050.2 427.7C1050.2 434.5 1050.2 431.1 1050.1 437.9C1050.0 444.7 1050.1 441.3 1049.9 448.0C1049.8 454.8 1049.9 451.4 1049.6 458.2C1049.4 465.0 1049.5 461.6 1049.2 468.3C1048.9 475.1 1049.1 471.7 1048.7 478.5C1048.3 485.2 1048.5 481.9 1048.1 488.6C1047.7 495.4 1047.9 492.0 1047.5 498.8C1047.0 505.5 1047.2 502.1 1046.7 508.9C1046.3 515.6 1046.5 512.3 1046.0 519.0C1045.4 525.8 1045.7 522.4 1045.1 529.1C1044.4 535.9 1044.8 532.5 1044.0 539.2C1043.2 545.9 1043.6 542.6 1042.7 549.3C1041.8 556.0 1042.3 552.6 1041.2 559.3C1040.2 566.0 1040.7 562.7 1039.6 569.3C1038.5 576.0 1039.1 572.7 1037.9 579.3C1036.7 586.0 1037.3 582.7 1036.1 589.3C1034.9 596.0 1035.5 592.7 1034.2 599.3C1033.0 606.0 1033.6 602.7 1032.3 609.3C1030.9 615.9 1031.6 612.6 1030.2 619.2C1028.7 625.8 1029.5 622.5 1027.9 629.1C1026.4 635.7 1027.2 632.4 1025.5 639.0C1023.8 645.5 1024.7 642.3 1022.9 648.8C1021.1 655.3 1022.0 652.1 1020.2 658.6C1018.3 665.1 1019.3 661.8 1017.3 668.3C1015.3 674.8 1016.3 671.6 1014.3 678.0C1012.2 684.4 1013.3 681.2 1011.1 687.6C1008.9 694.0 1010.0 690.8 1007.8 697.2C1005.5 703.6 1006.6 700.4 1004.3 706.8C1002.0 713.2 1003.2 710.0 1000.9 716.3C998.6 722.7 999.7 719.5 997.4 725.9C995.1 732.3 996.3 729.1 994.0 735.5C991.7 741.8 992.9 738.6 990.6 745.0C988.4 751.4 989.5 748.2 987.2 754.6C984.9 761.0 986.1 757.8 983.7 764.1C981.4 770.5 982.6 767.3 980.1 773.6C977.7 779.9 979.0 776.8 976.4 783.1C973.8 789.3 975.2 786.2 972.5 792.4C969.8 798.6 971.2 795.5 968.3 801.7C965.4 807.8 966.9 804.7 963.8 810.8C960.8 816.8 962.4 813.8 959.1 819.7C955.9 825.7 957.6 822.8 954.1 828.6C950.7 834.4 952.5 831.5 948.8 837.2C945.1 842.8 947.0 840.0 943.0 845.4C939.0 850.9 941.1 848.2 936.8 853.4C932.5 858.6 934.7 856.0 930.1 861.0C925.5 865.9 927.9 863.5 923.1 868.2C918.2 872.9 920.7 870.7 915.7 875.1C910.6 879.6 913.2 877.5 908.0 881.7C902.7 885.9 905.4 883.9 899.9 887.8C894.4 891.7 897.2 889.8 891.5 893.4C885.8 897.0 888.7 895.3 882.8 898.6C877.0 901.9 879.9 900.3 873.9 903.3C867.8 906.3 870.9 904.9 864.7 907.6C858.5 910.4 861.6 909.0 855.4 911.6C849.1 914.1 852.2 912.9 845.9 915.1C839.5 917.4 842.7 916.3 836.3 918.4C829.8 920.4 833.1 919.5 826.6 921.3C820.1 923.1 823.3 922.3 816.8 923.8C810.2 925.4 813.5 924.7 806.9 926.1C800.2 927.4 803.6 926.8 796.9 927.9C790.2 929.1 793.6 928.6 786.9 929.5C780.2 930.4 783.5 930.0 776.8 930.8C770.1 931.5 773.5 931.2 766.7 931.7C760.0 932.1 763.3 932.0 756.6 932.2C749.9 932.3 753.2 932.3 746.5 932.2C739.7 932.0 743.1 932.2 736.4 931.7C729.6 931.2 733.0 931.5 726.3 930.6C719.6 929.8 722.9 930.3 716.3 929.1C709.6 927.9 712.9 928.6 706.4 927.1C699.8 925.6 703.1 926.4 696.6 924.6C690.1 922.8 693.3 923.8 686.9 921.6C680.5 919.4 683.7 920.6 677.4 918.1C671.1 915.6 674.2 917.0 668.1 914.1C662.0 911.3 665.0 912.8 659.1 909.6C653.1 906.4 656.0 908.1 650.3 904.6C644.6 901.0 647.4 902.9 641.9 899.0C636.3 895.2 639.0 897.2 633.7 893.0C628.4 888.9 631.0 891.0 625.9 886.6C620.9 882.1 623.4 884.4 618.5 879.7C613.6 875.1 616.0 877.4 611.3 872.6C606.7 867.7 609.0 870.2 604.5 865.1C600.0 860.1 602.2 862.6 597.9 857.4C593.6 852.2 595.7 854.8 591.6 849.5C587.4 844.1 589.4 846.8 585.4 841.4C581.4 835.9 583.4 838.7 579.6 833.1C575.7 827.6 577.6 830.4 573.9 824.7C570.2 819.0 572.0 821.9 568.5 816.1C565.0 810.4 566.7 813.3 563.4 807.4C560.0 801.5 561.7 804.5 558.5 798.5C555.3 792.5 556.9 795.5 553.8 789.5C550.7 783.5 552.2 786.5 549.3 780.4C546.4 774.3 547.8 777.4 545.0 771.2C542.2 765.1 543.6 768.1 540.9 761.9C538.1 755.7 539.5 758.8 536.9 752.6C534.2 746.4 535.5 749.5 533.0 743.2C530.4 737.0 531.6 740.1 529.2 733.8C526.7 727.5 527.9 730.7 525.6 724.3C523.2 718.0 524.3 721.2 522.1 714.8C519.9 708.4 521.0 711.6 518.8 705.2C516.7 698.7 517.8 702.0 515.7 695.5C513.7 689.1 514.7 692.3 512.7 685.8C510.7 679.3 511.7 682.6 509.8 676.1C507.9 669.6 508.8 672.8 507.0 666.3C505.2 659.8 506.1 663.1 504.3 656.5C502.6 650.0 503.4 653.3 501.7 646.7C500.1 640.1 500.9 643.4 499.3 636.8C497.7 630.3 498.5 633.6 497.0 627.0C495.6 620.3 496.3 623.7 494.9 617.0C493.5 610.4 494.2 613.7 492.9 607.1C491.5 600.4 492.2 603.8 490.9 597.1C489.7 590.5 490.3 593.8 489.1 587.1C487.9 580.5 488.5 583.8 487.3 577.1C486.2 570.5 486.7 573.8 485.6 567.1C484.4 560.4 485.0 563.8 483.9 557.1C482.8 550.4 483.3 553.8 482.3 547.1C481.2 540.4 481.7 543.7 480.8 537.0C479.9 530.3 480.3 533.7 479.6 527.0C478.8 520.3 479.2 523.6 478.6 516.9C477.9 510.1 478.2 513.5 477.7 506.8C477.2 500.0 477.5 503.4 477.0 496.6C476.6 489.9 476.8 493.3 476.5 486.5C476.1 479.7 476.3 483.1 476.0 476.3C475.7 469.6 475.8 473.0 475.6 466.2C475.4 459.4 475.5 462.8 475.3 456.0C475.1 449.3 475.2 452.7 475.0 445.9C474.9 439.1 474.9 442.5 474.8 435.7C474.7 429.0 474.7 432.4 474.7 425.6C474.7 418.8 474.7 422.2 474.7 415.4C474.8 408.7 474.7 412.1 474.9 405.3C475.1 398.5 475.0 401.9 475.4 395.2C475.7 388.4 475.5 391.8 476.0 385.0C476.5 378.3 476.2 381.6 476.9 374.9C477.5 368.2 477.1 371.5 477.9 364.8C478.8 358.1 478.3 361.5 479.3 354.8C480.3 348.1 479.7 351.4 481.1 344.8C482.4 338.2 481.6 341.5 483.2 334.9C484.8 328.4 484.0 331.6 485.8 325.1C487.7 318.6 486.7 321.9 488.8 315.4C490.8 309.0 489.8 312.2 492.0 305.8C494.1 299.4 493.0 302.6 495.3 296.2C497.6 289.8 496.4 293.0 498.7 286.6C501.1 280.3 499.9 283.4 502.3 277.1C504.7 270.8 503.4 273.9 506.0 267.7C508.5 261.4 507.2 264.5 509.9 258.4C512.7 252.2 511.2 255.2 514.3 249.2C517.3 243.2 515.7 246.1 519.0 240.3C522.3 234.4 520.6 237.3 524.2 231.6C527.8 225.9 525.9 228.7 529.8 223.2C533.8 217.7 531.7 220.4 535.9 215.1C540.1 209.9 538.0 212.4 542.5 207.4C547.0 202.4 544.7 204.8 549.5 200.1C554.3 195.4 551.8 197.7 556.9 193.3C562.0 188.9 559.4 191.0 564.7 187.0C570.1 182.9 567.4 184.8 573.0 181.2C578.7 177.6 575.8 179.3 581.7 176.1C587.6 172.9 584.6 174.4 590.7 171.6C596.8 168.9 593.7 170.2 600.1 167.9C606.4 165.6 603.2 166.7 609.7 164.7C616.1 162.8 612.9 163.7 619.4 162.1C626.0 160.4 622.7 161.2 629.3 159.8C635.9 158.5 632.6 159.1 639.3 157.9C645.9 156.8 642.6 157.3 649.3 156.3C656.0 155.2 652.6 155.8 659.3 154.8C666.0 153.8 662.7 154.3 669.4 153.3C676.1 152.3 672.7 152.8 679.4 151.8C686.1 150.8 682.8 151.3 689.5 150.4C696.2 149.4 692.8 149.9 699.5 148.9C706.2 147.9 702.9 148.4 709.6 147.4C716.3 146.5 712.9 146.9 719.6 146.1C726.3 145.2 723.0 145.6 729.7 144.8C736.4 144.0 733.0 144.3 739.8 143.7C746.5 143.1 743.1 143.3 749.9 142.9C756.6 142.5 753.3 142.6 760.0 142.4Z" fill="none" stroke="#5e2220" stroke-width="7" opacity="0.75" filter="url(#b22)" /></g><rect x="592" y="233" width="290" height="190" rx="60" fill="#cccbc8" filter="url(#b300)" opacity="0.97"/><ellipse cx="750" cy="330" rx="110" ry="70" fill="#cdccc9" opacity="0.8" filter="url(#b250)"/><g mask="url(#shM)"><rect x="890" y="120" width="180" height="830" fill="url(#rsh)"/></g><g mask="url(#shM2)"><rect x="460" y="120" width="130" height="830" fill="url(#lsh)"/></g><g mask="url(#lrdM)"><rect x="860" y="600" width="200" height="300" fill="url(#lrd)"/></g><ellipse cx="625" cy="186" rx="115" ry="20" fill="#d3d0cd" opacity="0.6" filter="url(#b130)" transform="rotate(-22 625 186)"/><ellipse cx="770" cy="152" rx="110" ry="9" fill="#d3d0cd" opacity="0.5" filter="url(#b80)"/><ellipse cx="548" cy="340" rx="42" ry="120" fill="#d2c6be" opacity="0.55" filter="url(#b220)"/><ellipse cx="620" cy="426" rx="80" ry="14" fill="#cfc9c3" opacity="0.8" filter="url(#b100)"/><ellipse cx="905" cy="426" rx="85" ry="14" fill="#cec6bf" opacity="0.7" filter="url(#b100)"/><path d="M660 380 L860 380 C830 430 790 470 772 520 L742 520 C724 470 690 430 660 380Z" fill="#cfccc8" stroke="none" stroke-width="0" opacity="0.9" filter="url(#b140)" /><ellipse cx="612" cy="500" rx="95" ry="50" fill="#c4a28e" opacity="0.85" filter="url(#b180)"/><ellipse cx="905" cy="500" rx="100" ry="50" fill="#c3a18c" opacity="0.85" filter="url(#b180)"/><path d="M556.0 449.0C565.7 447.7 563.7 446.3 585.0 445.0C606.3 443.7 594.3 442.3 620.0 445.0C645.7 447.7 638.7 446.7 662.0 453.0C685.3 459.3 676.3 457.0 690.0 464.0C703.7 471.0 698.7 470.7 703.0 474.0" fill="none" stroke="#bc957f" stroke-width="14" opacity="0.8" filter="url(#b55)" stroke-linecap="round"/><ellipse cx="670" cy="455" rx="32" ry="7" fill="#b58d77" opacity="0.6" filter="url(#b50)" transform="rotate(18 670 455)"/><path d="M821.0 464.0C825.7 460.7 820.3 459.7 835.0 454.0C849.7 448.3 838.3 450.0 865.0 447.0C891.7 444.0 883.3 445.3 915.0 445.0C946.7 444.7 929.0 444.3 960.0 446.0C991.0 447.7 992.0 448.7 1008.0 450.0" fill="none" stroke="#b28b75" stroke-width="18" opacity="0.92" filter="url(#b55)" stroke-linecap="round"/><ellipse cx="585" cy="466" rx="30" ry="7" fill="#ceb9ab" opacity="0.7" filter="url(#b60)" transform="rotate(-8 585 466)"/><ellipse cx="940" cy="468" rx="40" ry="7" fill="#c8ae9c" opacity="0.5" filter="url(#b60)" transform="rotate(3 940 468)"/><ellipse cx="722" cy="590" rx="16" ry="50" fill="#b08974" opacity="0.8" filter="url(#b100)"/><ellipse cx="793" cy="585" rx="16" ry="50" fill="#aa826e" opacity="0.85" filter="url(#b100)"/><ellipse cx="728" cy="505" rx="13" ry="38" fill="#ba9a85" opacity="0.55" filter="url(#b100)"/><ellipse cx="786" cy="505" rx="13" ry="38" fill="#ba9a85" opacity="0.55" filter="url(#b100)"/><path d="M746 470 C749 520 750 560 750 600 C750 620 748 635 748 645 L766 645 C766 635 764 620 764 600 C764 560 765 520 768 470Z" fill="#d4d0cb" stroke="none" stroke-width="0" opacity="0.9" filter="url(#b60)" /><ellipse cx="757" cy="600" rx="7" ry="35" fill="#d8d4cf" opacity="0.7" filter="url(#b40)"/><ellipse cx="757" cy="642" rx="36" ry="16" fill="#c8a594" opacity="0.85" filter="url(#b80)"/><ellipse cx="690" cy="608" rx="19" ry="24" fill="#d6cabf" opacity="0.95" filter="url(#b90)"/><ellipse cx="820" cy="610" rx="15" ry="20" fill="#c4a792" opacity="0.85" filter="url(#b90)"/><path d="M673.0 650.0C674.0 652.3 673.0 652.7 676.0 657.0C679.0 661.3 674.3 659.7 682.0 663.0C689.7 666.3 689.0 666.7 699.0 667.0C709.0 667.3 705.3 667.3 712.0 664.0C718.7 660.7 714.3 657.3 719.0 657.0C723.7 656.7 721.0 659.0 726.0 663.0C731.0 667.0 727.7 664.7 734.0 669.0C740.3 673.3 737.0 672.8 745.0 676.0C753.0 679.2 749.0 678.8 758.0 678.5C767.0 678.2 764.3 678.5 772.0 675.0C779.7 671.5 775.7 673.0 781.0 668.0C786.3 663.0 783.3 661.3 788.0 660.0C792.7 658.7 789.3 661.7 795.0 664.0C800.7 666.3 795.0 665.7 805.0 667.0C815.0 668.3 815.0 669.3 825.0 668.0C835.0 666.7 830.0 666.7 835.0 663.0C840.0 659.3 837.7 661.3 840.0 657.0C842.3 652.7 841.3 652.3 842.0 650.0" fill="none" stroke="#8a5248" stroke-width="22" opacity="0.8" filter="url(#b80)" stroke-linecap="round"/><path d="M673.0 650.0C674.0 652.3 673.0 652.7 676.0 657.0C679.0 661.3 674.3 659.7 682.0 663.0C689.7 666.3 689.0 666.7 699.0 667.0C709.0 667.3 705.3 667.3 712.0 664.0C718.7 660.7 714.3 657.3 719.0 657.0C723.7 656.7 721.0 659.0 726.0 663.0C731.0 667.0 727.7 664.7 734.0 669.0C740.3 673.3 737.0 672.8 745.0 676.0C753.0 679.2 749.0 678.8 758.0 678.5C767.0 678.2 764.3 678.5 772.0 675.0C779.7 671.5 775.7 673.0 781.0 668.0C786.3 663.0 783.3 661.3 788.0 660.0C792.7 658.7 789.3 661.7 795.0 664.0C800.7 666.3 795.0 665.7 805.0 667.0C815.0 668.3 815.0 669.3 825.0 668.0C835.0 666.7 830.0 666.7 835.0 663.0C840.0 659.3 837.7 661.3 840.0 657.0C842.3 652.7 841.3 652.3 842.0 650.0" fill="none" stroke="#5e2824" stroke-width="11" opacity="0.8" filter="url(#b42)" stroke-linecap="round"/><path d="M726 663 C738 659 748 661 757 664 C766 661 776 659 787 662 C785 675 772 681 757 681 C742 681 730 675 726 663Z" fill="#330707" stroke="none" stroke-width="0" opacity="0.97" filter="url(#b30)" /><path d="M719.0 648.0C719.3 650.7 719.0 651.0 720.0 656.0C721.0 661.0 721.3 660.7 722.0 663.0" fill="none" stroke="#6a3430" stroke-width="2.5" opacity="0.6" filter="url(#b15)" /><path d="M800.0 628.0C798.7 634.0 799.7 635.7 796.0 646.0C792.3 656.3 791.3 654.7 789.0 659.0" fill="none" stroke="#8a5a50" stroke-width="3.5" opacity="0.6" filter="url(#b25)" /><ellipse cx="757" cy="694" rx="85" ry="14" fill="#87564c" opacity="0.6" filter="url(#b100)"/><ellipse cx="758" cy="716" rx="24" ry="16" fill="#c4a48c" opacity="0.9" filter="url(#b80)"/><ellipse cx="610" cy="566" rx="55" ry="9" fill="#d0c0b2" opacity="0.75" filter="url(#b70)" transform="rotate(5 610 566)"/><ellipse cx="880" cy="560" rx="50" ry="11" fill="#d6cabf" opacity="0.9" filter="url(#b80)" transform="rotate(6 880 560)"/><ellipse cx="930" cy="566" rx="45" ry="10" fill="#cebbac" opacity="0.7" filter="url(#b90)" transform="rotate(-6 930 566)"/><ellipse cx="600" cy="600" rx="80" ry="32" fill="#c4a690" opacity="0.5" filter="url(#b220)"/><ellipse cx="910" cy="600" rx="80" ry="32" fill="#c4a690" opacity="0.5" filter="url(#b220)"/><ellipse cx="656" cy="555" rx="34" ry="6" fill="#d8d0c8" opacity="0.75" filter="url(#b40)" transform="rotate(-9 656 555)"/><ellipse cx="850" cy="552" rx="30" ry="11" fill="#d8d2cc" opacity="0.85" filter="url(#b60)" transform="rotate(8 850 552)"/><path d="M539 526C543 508 572 476 608 475C648 474 680 505 692 536C675 548 645 556 608 556.5C575 556.500 547 545 539 526Z" fill="#c4a08b" stroke="#a07a66" stroke-width="5" opacity="0.9" filter="url(#b25)" /><path d="M539 526C543 508 572 476 608 475C648 474 680 505 692 536C675 548 645 556 608 556.5C575 556.500 547 545 539 526Z" fill="#c4a08b" stroke="#bf9a85" stroke-width="1.5" opacity="1" filter="url(#b8)" /><path d="M545 519C556 521 570 522 585 522C620 522 660 525 687 530C680 536 665 541 647 544C630 548 615 549.500 605 549.500C583 549.500 556 541 545 519Z" fill="#b8917c" stroke="none" stroke-width="0" opacity="0.9" filter="url(#b30)" /><path d="M552 528C570 544 590 549.500 606 549.500C625 549.500 650 545 672 537" fill="none" stroke="#a07a66" stroke-width="1.6" opacity="0.8" filter="url(#b10)" /><path d="M545.500 519C554 498 584 479 610 479C646 479 672 505 688 530C660 525 620 522 585 522C570 522 556 521 545.500 519Z" fill="#cdbbad" stroke="#bb9782" stroke-width="1.2" opacity="1" filter="url(#b24)" /><ellipse cx="618" cy="499" rx="34" ry="15" fill="#d3cdc7" opacity="0.95" filter="url(#b70)" transform="rotate(4 618 499)"/><path d="M560 521.500C590 523 640 524 680 529" fill="none" stroke="#bf9b86" stroke-width="2.5" opacity="0.7" filter="url(#b15)" /><path d="M541.500 531C556 546 585 553.500 608 553.500C640 553.500 668 547 689 539" fill="none" stroke="#ccb09d" stroke-width="3" opacity="0.9" filter="url(#b12)" /><path d="M654 536.500C668 535.500 680 537 690 539.500" fill="none" stroke="#d8c9bd" stroke-width="1.8" opacity="0.9" filter="url(#b9)" /><path d="M833 528C838 508 872 477 905 477C942 477 968 503 976 527C970 540 940 552 908 552.500C875 552.500 845 545 833 528Z" fill="#c29e88" stroke="#a07a66" stroke-width="5" opacity="0.9" filter="url(#b25)" /><path d="M833 528C838 508 872 477 905 477C942 477 968 503 976 527C970 540 940 552 908 552.500C875 552.500 845 545 833 528Z" fill="#c29e88" stroke="#bf9a85" stroke-width="1.5" opacity="1" filter="url(#b8)" /><path d="M837 526C846 505 875 481 905 481C940 481 965 505 972.500 526C962 536 940 543 910 543.500C890 543.500 872 538.500 862 533C853 531 845 528.500 837 526Z" fill="#c9ad99" stroke="#af8a75" stroke-width="1.2" opacity="1" filter="url(#b9)" /><ellipse cx="892" cy="500" rx="32" ry="14" fill="#d3cdc7" opacity="0.95" filter="url(#b70)" transform="rotate(-16 892 500)"/><path d="M860 532C875 539.500 892 544 910 544C935 544 955 538 966 527" fill="none" stroke="#a07a66" stroke-width="2" opacity="0.9" filter="url(#b10)" /><path d="M838 532C855 543 880 549 908 549C935 549 960 542 973 531" fill="none" stroke="#c9ab97" stroke-width="2.5" opacity="0.8" filter="url(#b12)" /><path d="M652 760C670 755 690 745 710 738C725 733 745 732 758 734C772 732 792 733 806 737C822 742 838 749 850 754C860 758 864 760 868 762C850 772 810 776 760 775C710 776 672 770 652 760Z" fill="#c9a58e" stroke="none" stroke-width="0" opacity="0.97" filter="url(#b45)" /><path d="M714 741C727 734 745 734 758 736C772 734 790 734 803 739C808 746 806 753 798 755C770 757 742 757 718 755C710 752 710 746 714 741Z" fill="#cdc5bd" stroke="none" stroke-width="0" opacity="0.97" filter="url(#b50)" /><path d="M670 777C692 781 720 781 760 780C800 781 832 779 858 774C852 786 843 796 831 803C812 814 790 821 762 821C735 821 712 814 695 803C684 796 675 787 670 777Z" fill="#c9a890" stroke="none" stroke-width="0" opacity="0.98" filter="url(#b35)" /><ellipse cx="758" cy="788" rx="52" ry="8" fill="#d2b8a3" opacity="0.8" filter="url(#b60)"/><path d="M697 771C720 773 740 773 760 772.5C790 773 820 773 847 769" fill="none" stroke="#ae866f" stroke-width="6" opacity="0.7" filter="url(#b30)" stroke-linecap="round"/><path d="M672 788C682 800 698 810 715 816C730 821 745 824 762 824C780 824 795 821 810 816C825 810 838 800 846 790" fill="none" stroke="#7a4038" stroke-width="10" opacity="0.7" filter="url(#b45)" stroke-linecap="round"/><path d="M684 800C703 812 730 822 762 823.500C792 822 820 812 838 800C820 819 792 830.500 762 831C732 830.500 704 819 684 800Z" fill="#3a0a0a" stroke="#3a0a0a" stroke-width="2" opacity="0.95" filter="url(#b18)" /><ellipse cx="652" cy="764" rx="10" ry="8" fill="#93685a" opacity="0.5" filter="url(#b50)"/><ellipse cx="872" cy="766" rx="10" ry="8" fill="#8a5e52" opacity="0.5" filter="url(#b50)"/><ellipse cx="760" cy="853" rx="85" ry="24" fill="#b99a82" opacity="0.9" filter="url(#b150)"/></g>
<circle cx="1445.5" cy="124" r="16.5" fill="none" stroke="#c87a2b" stroke-width="1.6"/><rect x="1444" y="122.500" width="3" height="3" fill="#e08226"/>
</svg></div>
<div id="side">
<div class="sec" style="top:8.5px"><div class="tri"></div></div>
<div class="sec" style="top:52.5px"><div class="tri"></div></div>
<div class="sec" style="top:96.5px"><div class="tri"></div></div>
<svg width="384" height="952" viewBox="1536 78 384 952" style="position:absolute;left:0;top:0" font-family="Liberation Sans, sans-serif"><text x="1692.7" y="111.0" font-size="19.5" fill="#dadada" textLength="107.5" lengthAdjust="spacingAndGlyphs" stroke="#dadada" stroke-width="0.5">RENDERING</text><text x="1695.4" y="155.0" font-size="19.5" fill="#dadada" textLength="102.1" lengthAdjust="spacingAndGlyphs" stroke="#dadada" stroke-width="0.5">TOPOLOGY</text><text x="1638.8" y="199.0" font-size="19.5" fill="#dadada" textLength="215.3" lengthAdjust="spacingAndGlyphs" stroke="#dadada" stroke-width="0.5">SCULPTING &amp; PAINTING</text></svg></div>
<div id="task"><svg width="1920" height="50" viewBox="0 0 1920 50" style="position:absolute;left:0;top:0"><defs><filter id="tb1"><feGaussianBlur stdDeviation="0.6"/></filter><filter id="tb2"><feGaussianBlur stdDeviation="1.5"/></filter><radialGradient id="sph" cx="0.55" cy="0.5" r="0.6"><stop offset="0" stop-color="#3a381f"/><stop offset="0.6" stop-color="#24230f"/><stop offset="1" stop-color="#3a1c0c"/></radialGradient><linearGradient id="vlc" x1="0" y1="0" x2="0" y2="1"><stop offset="0" stop-color="#f07c0a"/><stop offset="1" stop-color="#f9a21c"/></linearGradient><clipPath id="chc"><circle cx="337.8" cy="24.6" r="13.9"/></clipPath></defs><rect x="432" y="0" width="61" height="50" fill="#3a3b3e"/><rect x="189" y="47.5" width="51" height="2.5" fill="#8dc0ea"/><rect x="313" y="47.5" width="50" height="2.5" fill="#8dc0ea"/><rect x="375" y="47.5" width="51" height="2.5" fill="#8dc0ea"/><rect x="499" y="47.5" width="51" height="2.5" fill="#8dc0ea"/><rect x="561" y="47.5" width="51" height="2.5" fill="#8dc0ea"/><rect x="229" y="47.5" width="11" height="2.5" fill="#7397b5"/><rect x="355" y="47.5" width="8" height="2.5" fill="#7ea9cc"/><rect x="432" y="46.5" width="61" height="3.5" fill="#8dc0ea"/><g fill="#fff"><path d="M19.7 17.3L28 16.1V24.2H19.7Z"/><path d="M29.100 15.9L40.3 14.500V24.200H29.100Z"/><path d="M19.7 25.1H28V33.1L19.7 31.900Z"/><path d="M29.100 25.100H40.300V35.200L29.100 33.400Z"/></g><g fill="none" stroke="#ececec" stroke-width="1.5" stroke-linecap="round"><circle cx="92.8" cy="22" r="6.3"/><path d="M88.200 26.800L80.400 34.800"/></g><g fill="none" stroke="#f0f0f0" stroke-width="1.1"><path d="M140.400 14.500V33.800M152.400 14.500V33.800M140.400 18.800H152.400M140.400 28.700H152.400M140.400 31.400H152.400M158.500 14.500V33.800"/></g><rect x="157" y="21" width="3" height="3" fill="#fff"/><g><path d="M200 13.200H211.500L213.500 15H227.800V35.400H200Z" fill="#f8d978"/><rect x="225" y="15" width="2.800" height="20.400" fill="#fbeb9f"/><path d="M200 13.200H211.500L213.500 15H200Z" fill="#e9c45a"/><path d="M204.800 25.800H223.100V36H204.800Z" fill="#3b9ddd"/><path d="M206.500 27.500H221.400V29.500H206.500Z" fill="#5fb4ea"/><rect x="209" y="30.200" width="9.400" height="5.800" fill="#f8d978"/><path d="M200 33.500H204.800V35.400H200ZM223.100 33.500H227.800V35.400H223.100Z" fill="#f3d06a"/></g><path d="M264.200 24.500C265 17 270.500 12.700 276.800 12.700C284 12.700 288 18 288 25.500V27.800H271.500C271.800 31.800 275 33.800 279 33.800C282 33.800 284.800 33 287 31.600V36.500C284.500 37.800 281.500 38.400 278 38.400C270.500 38.400 265.800 33.800 265.800 27C265.800 22.500 268 19 271.500 17C268 18.300 265.500 21 264.200 24.500ZM271.700 23.300H281.300C281.200 20 279.600 17.800 276.600 17.800C274 17.800 272.200 20 271.700 23.300Z" fill="#1e82da"/><g clip-path="url(#chc)"><circle cx="337.8" cy="24.600" r="14" fill="#e8453c"/><path d="M337.800 24.600L325.500 17.500L320 30L334 42Z" fill="#34a853"/><path d="M337.800 24.600L325.760 17.650 L323 22 L322 40 L332.500 39.500Z" fill="#34a853"/><path d="M337.800 24.600H352V40L331.500 39.200Z" fill="#fbc116"/><path d="M337.800 18.800H352.500V25.200H337.800Z" fill="#fbc116"/><path d="M337.800 18.800H352.500V14H326Z" fill="#e8453c"/></g><circle cx="337.800" cy="24.600" r="6.200" fill="#eef3fb"/><circle cx="337.800" cy="24.600" r="4.600" fill="#4a86ee"/><g><rect x="389.500" y="13.500" width="21" height="22" rx="7" fill="#fff" transform="rotate(-14 400 24.500)"/><g stroke="#111" stroke-width="1.900" stroke-linecap="round"><path d="M397.500 18.500L395.500 28M402.500 17.500L400.500 27M393.500 21.500L404.500 19.700M393 26.500L403.500 24.700"/></g><circle cx="407.300" cy="32.300" r="7.500" fill="#f25d5d"/><path d="M405.300 29.800L407.800 28.300V36M405.500 36.200H410" stroke="#fff" stroke-width="1.400" fill="none"/></g><g><ellipse cx="461" cy="25.700" rx="13.800" ry="15.300" fill="url(#sph)" filter="url(#tb1)"/><path d="M459 10.800C450.500 13 447 20 447.300 27C447.600 33 451 38.500 455.500 40.500C452.500 36 451.500 31 452 26C452.500 20 455 14.500 459 10.800Z" fill="#b9b8ae" filter="url(#tb1)"/><path d="M456 22C459 18 464 17 467 20C468 24 465 27 461 27C458 27 456.500 25 456 22Z" fill="#5a552f" opacity="0.8" filter="url(#tb2)"/><ellipse cx="472.500" cy="26" rx="2.500" ry="9" fill="#5c2a10" opacity="0.8" filter="url(#tb2)"/></g><g><ellipse cx="522.800" cy="27" rx="13.500" ry="10" fill="#cfe3f0" transform="rotate(-28 522.800 27)"/><circle cx="513" cy="33.500" r="2.800" fill="#0a0d15"/><circle cx="514.400" cy="25.300" r="2.300" fill="#e27878"/><circle cx="518.900" cy="20.300" r="2.300" fill="#66c266"/><circle cx="524.500" cy="18.800" r="2.300" fill="#e9b234"/><circle cx="521.300" cy="27.700" r="1.800" fill="#1f2f60"/><path d="M533.200 16L535.400 16.800L525.300 38.600L523.400 37.800Z" fill="#d28232"/><path d="M533 16.500L534 12.500L536.500 13.200L535.600 17Z" fill="#e9c98e"/></g><g><path d="M585.900 9.800L598.700 38.400H573.200Z" fill="url(#vlc)"/><path d="M578.400 28.100H593.500L598.700 38.400H573.200Z" fill="#f59a14"/><path d="M583.500 15.200H588.300L590.200 19.400H581.600Z" fill="#f1efee"/><path d="M579.500 26.200H592.500L593.800 29.500C590 31.600 582 31.600 578.200 29.500Z" fill="#efedec"/><path d="M573.200 38.400H598.700V39.300H573.200Z" fill="#c86a08"/></g><g fill="none" stroke="#ededed" stroke-width="1.300" stroke-linecap="round"><circle cx="1570.800" cy="18.300" r="2.800"/><path d="M1567 23.600C1569.500 21.500 1573.500 22 1575.500 25.200"/><circle cx="1563" cy="26.400" r="2.800"/><path d="M1558.300 33.500C1558.800 28.300 1567.500 28.300 1568.100 33.500"/></g><path d="M1604.300 28.600L1612 20.900L1619.800 28.600" fill="none" stroke="#ededed" stroke-width="1.400"/><g fill="none" stroke="#ededed" stroke-width="1.200"><rect x="1634.800" y="20.500" width="16" height="9.800"/><path d="M1651.800 23.500V27.300"/><path d="M1633.800 18.500V20.500M1636.300 18.500V20.500M1632.700 20.600H1637.400V23.200C1637.400 24.500 1636.300 25 1635.050 25C1633.800 25 1632.700 24.500 1632.700 23.200ZM1635.050 25V27.500" stroke-width="1"/></g><path d="M1638.300 24H1649.800V29.200H1636.800V26Z" fill="#f4f4f4"/><g fill="none" stroke="#ededed" stroke-width="1.200"><path d="M1666.600 17.500H1681.500V29.900H1666"/><path d="M1672.700 30V32.500M1669 32.800H1676.500"/><rect x="1662.300" y="17.500" width="4" height="5.500" stroke-width="1"/><path d="M1664.300 23V33" stroke-width="1"/><path d="M1664.300 19.500V21" stroke-width="0.800"/></g><g fill="none" stroke="#ededed" stroke-width="1.200"><path d="M1692.500 21.600H1695.700L1698.900 18.400V31.400L1695.700 28.200H1692.500Z"/><path d="M1702.200 22.300C1703.800 23.800 1703.800 26.400 1702.200 28"/><path d="M1705.800 19.300C1708.800 22.300 1708.800 28 1705.800 31" opacity="0.85"/><path d="M1709.300 16.500C1713.300 21 1713.300 29.500 1709.300 34" opacity="0.35"/></g><g font-family="Liberation Sans, sans-serif" fill="#f2f2f2" font-size="14.500"><text x="1725.600" y="30.700" textLength="27.800" lengthAdjust="spacingAndGlyphs">ENG</text><text x="1791.800" y="18.700" textLength="32" lengthAdjust="spacingAndGlyphs">15:11</text><text x="1770.400" y="41.700" textLength="75.800" lengthAdjust="spacingAndGlyphs">04/09/2018</text></g><path d="M1869 15.100H1889V31.800H1875.500L1872.500 35V31.800H1869Z" fill="#f4f4f4"/><path d="M1872 19.800H1886M1872 23.500H1886M1872 27.300H1886" stroke="#0a0d15" stroke-width="1.300"/><circle cx="1888.750" cy="34.900" r="10.600" fill="#2b2d31" stroke="#8a8a8a" stroke-width="1"/><text x="1888.750" y="39.600" text-anchor="middle" font-family="Liberation Sans, sans-serif" font-weight="bold" font-size="13.500" fill="#fff" textLength="15" lengthAdjust="spacingAndGlyphs">21</text><rect x="1914" y="0" width="1" height="50" fill="#5c5c5c"/></svg></div>
</body></html>
